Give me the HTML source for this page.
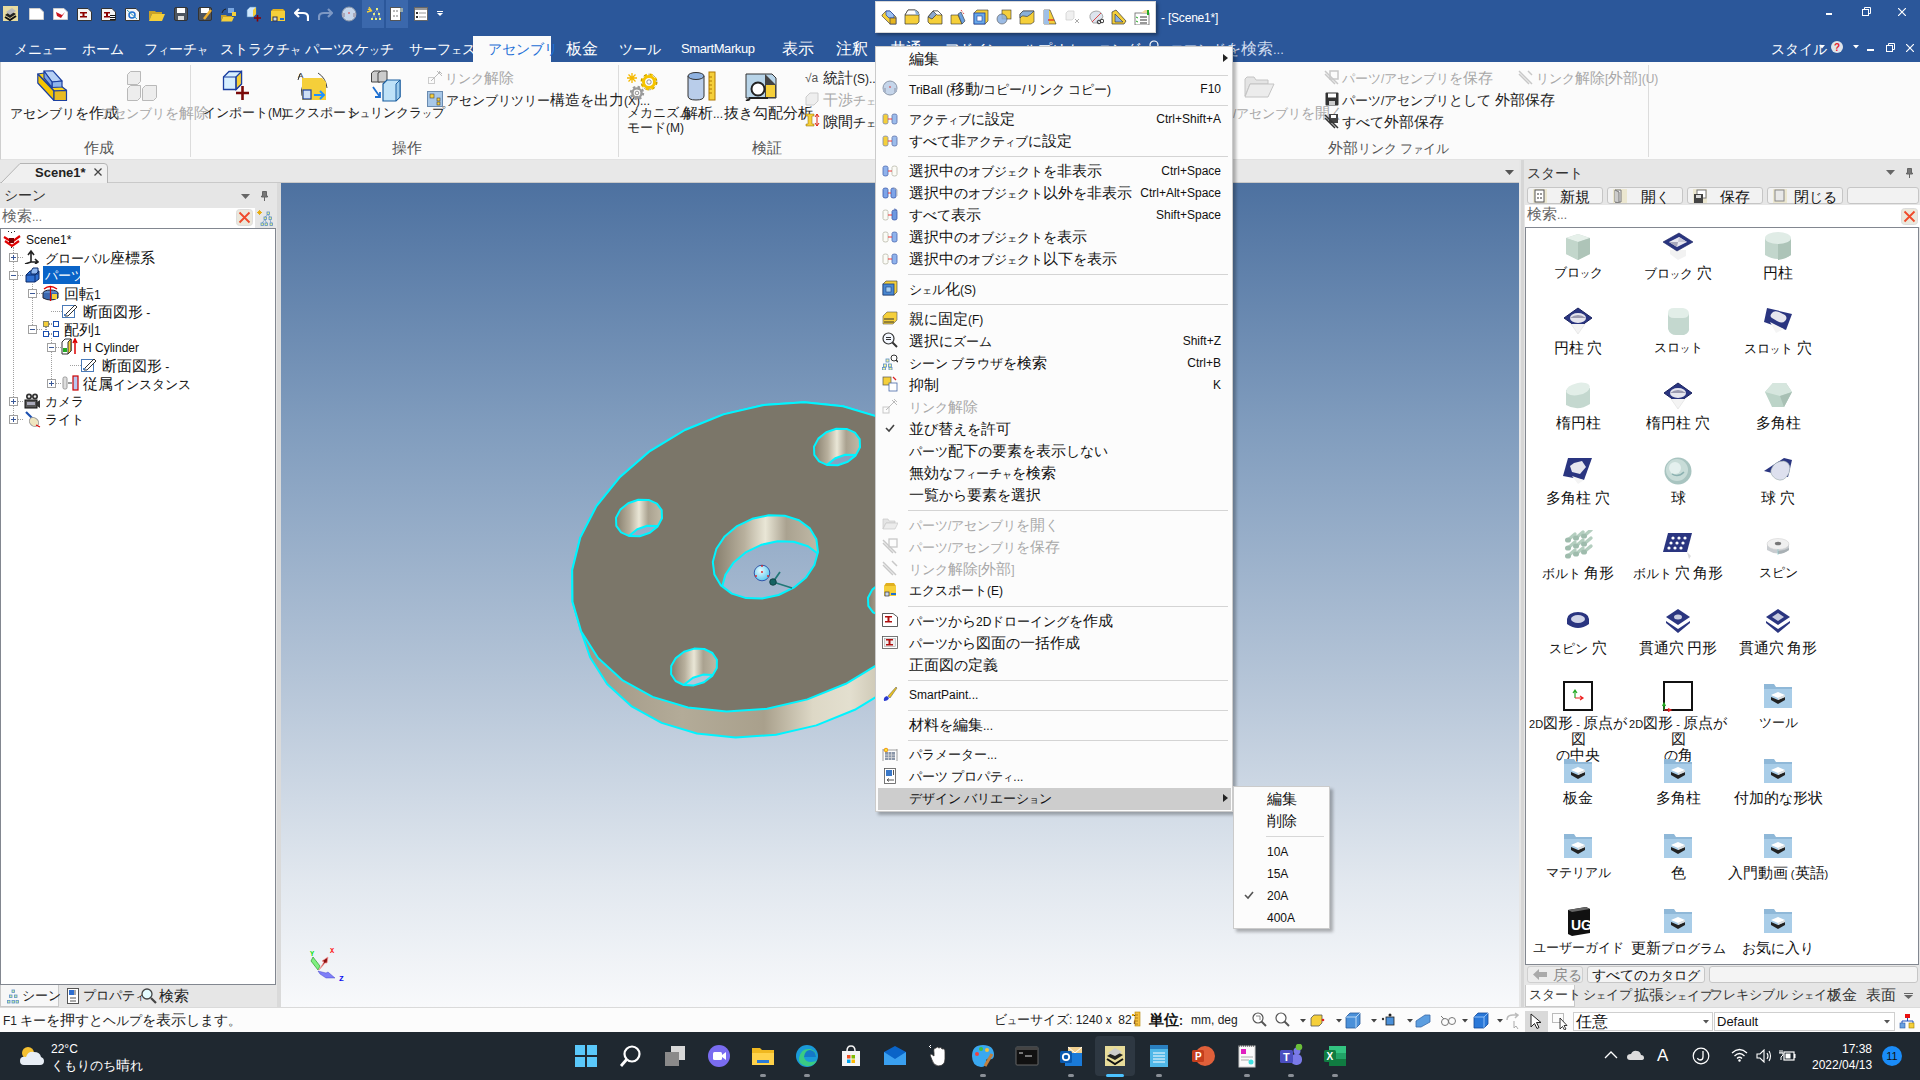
<!DOCTYPE html>
<html><head><meta charset="utf-8"><title>IronCAD</title>
<style>
*{box-sizing:border-box;margin:0;padding:0}
html,body{width:1920px;height:1080px;overflow:hidden;background:#f0f0f0;font-family:"Liberation Sans",sans-serif;font-size:12px;color:#222}
.a{position:absolute;display:block}
.t{position:absolute;white-space:nowrap;line-height:14px}
</style></head><body>
<div class="a" style="left:0px;top:0px;width:1920px;height:62px;background:#2b579a;"></div><div class="a" style="left:362px;top:0px;width:22px;height:28px;background:#3b68ac;"></div><div class="a" style="left:386px;top:0px;width:22px;height:28px;background:#3b68ac;"></div><svg class="a" style="left:3px;top:6px;" width="15" height="15" viewBox="0 0 15 15"><rect x="0" y="0" width="15" height="15" fill="#e8dca0"/><path d="M2 9 L8 5 L13 8 L7 12 Z" fill="#222"/><path d="M3 6 L9 2 L13 5 L7 9Z" fill="#bbb"/><path d="M2 11 L7 14 L13 10" stroke="#111" stroke-width="2" fill="none"/></svg><svg class="a" style="left:29px;top:8px;" width="15" height="12" viewBox="0 0 15 12"><path d="M0.5 0.5 H11 L14.5 4 V11.5 H0.5Z" fill="#fff" stroke="#ccc"/></svg><svg class="a" style="left:53px;top:8px;" width="15" height="12" viewBox="0 0 15 12"><path d="M0.5 0.5 H11 L14.5 4 V11.5 H0.5Z" fill="#fff" stroke="#ccc"/><path d="M3 4 L9 7 L12 4 L8 10 L4 8Z" fill="#c8141e"/></svg><svg class="a" style="left:77px;top:8px;" width="15" height="13" viewBox="0 0 15 13"><path d="M0.5 0.5 H11 L14.5 4 V12.5 H0.5Z" fill="#f4f4f4" stroke="#333"/><path d="M3 4 H10 V5.5 H7.5 V8 H10 V9.5 H3 V8 H5.5 V5.5 H3Z" fill="#8b0000"/></svg><svg class="a" style="left:101px;top:8px;" width="15" height="13" viewBox="0 0 15 13"><path d="M0.5 0.5 H11 L14.5 4 V12.5 H0.5Z" fill="#f4f4f4" stroke="#333"/><path d="M3 4 H9 V5.5 H7 V8 H9 V9.5 H3 V8 H5 V5.5 H3Z" fill="#8b0000"/><path d="M9 7.5H14.5 M9 9.5H14.5 M9 11.5H14.5" stroke="#111" stroke-width="1.1"/></svg><svg class="a" style="left:125px;top:8px;" width="15" height="13" viewBox="0 0 15 13"><path d="M0.5 0.5 H11 L14.5 4 V12.5 H0.5Z" fill="#f4f4f4" stroke="#333"/><circle cx="7" cy="7" r="3" fill="none" stroke="#1e6fd0" stroke-width="1.5"/><path d="M2 2 L12 11" stroke="#39b" /></svg><svg class="a" style="left:149px;top:9px;" width="16" height="12" viewBox="0 0 16 12"><path d="M0 2 H6 L7 3 H13 V5 H3 L0 12Z" fill="#c9a227"/><path d="M3 5 H16 L13 12 H0Z" fill="#f5cf3a"/></svg><svg class="a" style="left:174px;top:7px;" width="14" height="14" viewBox="0 0 14 14"><rect x="0.5" y="0.5" width="13" height="13" rx="1.5" fill="#4d5560" stroke="#333"/><rect x="3" y="1" width="8" height="5" fill="#fff"/><rect x="4" y="9" width="6" height="4" fill="#ddd"/></svg><svg class="a" style="left:198px;top:7px;" width="14" height="14" viewBox="0 0 14 14"><rect x="0.5" y="0.5" width="13" height="13" rx="1.5" fill="#4d5560" stroke="#333"/><rect x="3" y="1" width="8" height="5" fill="#fff"/><path d="M6 12 L13 3" stroke="#f0b030" stroke-width="2.5"/></svg><svg class="a" style="left:221px;top:6px;" width="16" height="16" viewBox="0 0 16 16"><path d="M0 9 H5 L6 10 H11 V11 H2 L0 15Z" fill="#c9a227"/><path d="M2 11 H13 L11 15.5 H0Z" fill="#f5cf3a"/><rect x="7" y="2" width="6" height="5" fill="#7aa7e0"/><rect x="11" y="6" width="4" height="4" fill="#f5cf3a"/><path d="M1 7 Q2 3 5 3" stroke="#222" fill="none"/></svg><svg class="a" style="left:246px;top:6px;" width="16" height="16" viewBox="0 0 16 16"><path d="M1 4 L4 1 H10 V8 L7 11 H1Z" fill="#cfe8ff" stroke="#5588bb" stroke-width="0.6"/><path d="M7 4 L10 1 V8 L7 11Z" fill="#f5cf3a"/><path d="M8 12 H15 M11.5 9 V15.5" stroke="#8b0000" stroke-width="1.6"/></svg><svg class="a" style="left:270px;top:7px;" width="16" height="15" viewBox="0 0 16 15"><path d="M1 4 H15 V14 H1Z" fill="#f5cf3a"/><path d="M1 4 L3 2 H13 L15 4Z" fill="#e0b020"/><rect x="3" y="10" width="4" height="4" fill="#ccd8e8" stroke="#334"/><rect x="10" y="11" width="4" height="2" fill="#1e6fd0"/></svg><svg class="a" style="left:294px;top:8px;" width="15" height="13" viewBox="0 0 15 13"><path d="M5 1 L1 5 L5 9" fill="none" stroke="#fff" stroke-width="2.2"/><path d="M2 5 H9 Q14 5 14 9 V13" fill="none" stroke="#fff" stroke-width="2.2"/></svg><svg class="a" style="left:318px;top:8px;" width="15" height="13" viewBox="0 0 15 13"><path d="M10 1 L14 5 L10 9" fill="none" stroke="#7d98c4" stroke-width="2.2"/><path d="M13 5 H6 Q1 5 1 9 V12" fill="none" stroke="#7d98c4" stroke-width="2.2"/></svg><svg class="a" style="left:341px;top:6px;" width="16" height="16" viewBox="0 0 16 16"><circle cx="8" cy="8" r="7" fill="#c5d5ea" stroke="#8a96a8"/><rect x="1" y="7" width="3" height="4" fill="#aab" /><rect x="12" y="7" width="3" height="4" fill="#aab"/><circle cx="8" cy="7" r="0.8" fill="#d22"/></svg><svg class="a" style="left:366px;top:6px;" width="15" height="15" viewBox="0 0 15 15"><path d="M3 1 L5 4 L2 3 L5 5 L1 6" stroke="#f5cf3a" fill="none" stroke-width="1.3"/><g fill="#e8f080"><rect x="10" y="2" width="2" height="2"/><rect x="7" y="7" width="2" height="2"/><rect x="12" y="7" width="2" height="2"/><rect x="5" y="12" width="2" height="2"/><rect x="9" y="12" width="2" height="2"/><rect x="13" y="12" width="2" height="2"/></g><path d="M11 4 L8 7 M11 4 L13 7 M8 9 L6 12 M8 9 L10 12 M13 9 L14 12" stroke="#aac" stroke-width="0.6"/></svg><svg class="a" style="left:390px;top:7px;" width="14" height="14" viewBox="0 0 14 14"><rect x="0.5" y="0.5" width="10" height="13" fill="#fff" stroke="#555"/><rect x="10" y="1" width="3" height="4" fill="#9aa"/><g fill="#bbb"><rect x="3" y="3" width="2" height="2"/><rect x="6" y="3" width="2" height="2"/><rect x="3" y="8" width="2" height="2"/><rect x="6" y="8" width="2" height="2"/></g></svg><svg class="a" style="left:414px;top:7px;" width="14" height="14" viewBox="0 0 14 14"><rect x="0.5" y="0.5" width="13" height="13" fill="#fff" stroke="#666"/><rect x="1" y="1" width="12" height="2" fill="#999"/><rect x="2" y="5" width="2" height="2" fill="#333"/><rect x="2" y="9" width="2" height="2" fill="#333"/><path d="M5 6H12 M5 10H12" stroke="#999"/></svg><svg class="a" style="left:437px;top:11px;" width="6" height="6" viewBox="0 0 6 6"><path d="M0 0.5H6" stroke="#fff"/><path d="M0 2 H6 L3 5Z" fill="#fff"/></svg><div class="t" style="left:1161px;top:11px;font-size:12px;color:#fff;letter-spacing:-0.2px;">- [Scene1*]</div><div class="a" style="left:1826px;top:13px;width:6px;height:1.5px;background:#fff;"></div><svg class="a" style="left:1862px;top:7px;" width="9" height="9" viewBox="0 0 9 9"><rect x="0.5" y="2.5" width="6" height="6" fill="none" stroke="#fff"/><path d="M2.5 2.5 V0.5 H8.5 V6.5 H6.5" fill="none" stroke="#fff"/></svg><svg class="a" style="left:1898px;top:8px;" width="8" height="8" viewBox="0 0 8 8"><path d="M0 0 L8 8 M8 0 L0 8" stroke="#fff" stroke-width="1.2"/></svg><div class="t" style="left:1771px;top:42px;font-size:13px;color:#fff;"><span style="font-size:14.0px;letter-spacing:0">スタイル</span></div><svg class="a" style="left:1819px;top:45px;" width="6" height="4" viewBox="0 0 6 4"><path d="M0 0H6L3 3.5Z" fill="#fff"/></svg><svg class="a" style="left:1831px;top:41px;" width="12" height="12" viewBox="0 0 12 12"><circle cx="6" cy="6" r="6" fill="#dfe4ea"/><text x="6" y="10" font-size="10" font-weight="bold" text-anchor="middle" fill="#e8202a" font-family="Liberation Sans">?</text></svg><svg class="a" style="left:1853px;top:45px;" width="6" height="4" viewBox="0 0 6 4"><path d="M0 0H6L3 3.5Z" fill="#fff"/></svg><div class="a" style="left:1867px;top:49px;width:7px;height:1.5px;background:#fff;"></div><svg class="a" style="left:1886px;top:43px;" width="9" height="9" viewBox="0 0 9 9"><rect x="0.5" y="2.5" width="6" height="6" fill="none" stroke="#fff"/><path d="M2.5 2.5 V0.5 H8.5 V6.5 H6.5" fill="none" stroke="#fff"/></svg><svg class="a" style="left:1906px;top:44px;" width="8" height="8" viewBox="0 0 8 8"><path d="M0 0 L8 8 M8 0 L0 8" stroke="#fff" stroke-width="1.2"/></svg><div class="a" style="left:473px;top:36px;width:78px;height:26px;background:#fbfbfb;"></div><div class="t" style="left:14px;top:42px;font-size:13px;color:#fff;"><span style="font-size:14.0px;letter-spacing:0">メニ</span><span style="font-size:11.0px;letter-spacing:0">ュ</span><span style="font-size:14.0px;letter-spacing:0">ー</span></div><div class="t" style="left:82px;top:42px;font-size:13px;color:#fff;"><span style="font-size:14.0px;letter-spacing:0">ホーム</span></div><div class="t" style="left:144px;top:42px;font-size:13px;color:#fff;"><span style="font-size:14.0px;letter-spacing:0">フ</span><span style="font-size:11.0px;letter-spacing:0">ィ</span><span style="font-size:14.0px;letter-spacing:0">ーチ</span><span style="font-size:11.0px;letter-spacing:0">ャ</span></div><div class="t" style="left:220px;top:42px;font-size:13px;color:#fff;"><span style="font-size:14.0px;letter-spacing:0">ストラクチ</span><span style="font-size:11.0px;letter-spacing:0">ャ</span> <span style="font-size:14.0px;letter-spacing:0">パーツ</span></div><div class="t" style="left:341px;top:42px;font-size:13px;color:#fff;"><span style="font-size:14.0px;letter-spacing:0">スケ</span><span style="font-size:11.0px;letter-spacing:0">ッ</span><span style="font-size:14.0px;letter-spacing:0">チ</span></div><div class="t" style="left:409px;top:42px;font-size:13px;color:#fff;"><span style="font-size:14.0px;letter-spacing:0">サーフ</span><span style="font-size:11.0px;letter-spacing:0">ェ</span><span style="font-size:14.0px;letter-spacing:0">ス</span></div><div class="t" style="left:566px;top:42px;font-size:13px;color:#fff;"><span style="font-size:16.0px;letter-spacing:0">板金</span></div><div class="t" style="left:619px;top:42px;font-size:13px;color:#fff;"><span style="font-size:14.0px;letter-spacing:0">ツール</span></div><div class="t" style="left:681px;top:42px;font-size:13px;color:#fff;letter-spacing:-0.4px;">SmartMarkup</div><div class="t" style="left:782px;top:42px;font-size:13px;color:#fff;"><span style="font-size:16.0px;letter-spacing:0">表示</span></div><div class="t" style="left:836px;top:42px;font-size:13px;color:#fff;"><span style="font-size:16.0px;letter-spacing:0">注釈</span></div><div class="t" style="left:890px;top:42px;font-size:13px;color:#fff;"><span style="font-size:16.0px;letter-spacing:0">共通</span></div><div class="t" style="left:945px;top:42px;font-size:13px;color:#fff;"><span style="font-size:14.0px;letter-spacing:0">アドイン</span></div><div class="t" style="left:1010px;top:42px;font-size:13px;color:#fff;"><span style="font-size:14.0px;letter-spacing:0">ヘルプ</span>/<span style="font-size:14.0px;letter-spacing:0">トレーニング</span></div><div class="t" style="left:488px;top:42px;font-size:13px;color:#1d6fd6;"><span style="font-size:14.0px;letter-spacing:0">アセンブリ</span></div><svg class="a" style="left:1149px;top:40px;" width="12" height="12" viewBox="0 0 12 12"><circle cx="5" cy="5" r="4" fill="none" stroke="#fff" stroke-width="1.2"/><path d="M8 8 L11 11" stroke="#fff" stroke-width="1.3"/></svg><div class="t" style="left:1170px;top:42px;font-size:13px;color:#d0dcee;"><span style="font-size:14.0px;letter-spacing:0">コマンド</span><span style="font-size:15.0px;letter-spacing:0">を</span><span style="font-size:16.0px;letter-spacing:0">検索</span>...</div><div class="a" style="left:0px;top:62px;width:1920px;height:98px;background:#fbfbfb;border-left:1px solid #cfcfcf;border-bottom:1px solid #e2e2e2;"></div><div class="a" style="left:190px;top:65px;width:1px;height:92px;background:#dcdcdc;"></div><div class="a" style="left:618px;top:65px;width:1px;height:92px;background:#dcdcdc;"></div><div class="a" style="left:1648px;top:65px;width:1px;height:92px;background:#dcdcdc;"></div><svg class="a" style="left:37px;top:70px;" width="32" height="32" viewBox="0 0 32 32"><g stroke="#1b3fa0" stroke-width="1.2" stroke-linejoin="round"><path d="M0.8 4 L7 3 L29.5 20.3 L17 21Z" fill="#f7d21e"/><path d="M0.8 4 L17 21 V30.5 L0.8 13Z" fill="#f5c400"/><path d="M17 21 L29.5 20.3 V30.5 H17Z" fill="#e8bb22"/><path d="M7 1 L16 0.8 L25 11 L15 12Z" fill="#b6d0f5"/><path d="M15 12 L25 11 V17 L15 17.5Z" fill="#8fb4ea"/><path d="M7 1 L15 12 V17.5 L7 8Z" fill="#7ea4e0"/></g></svg><div class="t" style="left:10px;top:106px;font-size:12px;color:#222;"><span style="font-size:13.0px;letter-spacing:0">アセンブリ</span><span style="font-size:14.0px;letter-spacing:0">を</span><span style="font-size:15.0px;letter-spacing:0">作成</span></div><svg class="a" style="left:126px;top:70px;" width="32" height="32" viewBox="0 0 32 32"><g fill="#ededed" stroke="#b9b9b9"><path d="M1.5 4.5 L4.5 1.5 H14.5 V11.5 L11.5 14.5 H1.5Z"/><path d="M1.5 18.5 L4.5 15.5 H14.5 V27.5 L11.5 30.5 H1.5Z"/><path d="M16.5 18.5 L19.5 15.5 H30.5 V27.5 L27.5 30.5 H16.5Z"/></g></svg><div class="t" style="left:100px;top:106px;font-size:12px;color:#a8a8a8;"><span style="font-size:13.0px;letter-spacing:0">アセンブリ</span><span style="font-size:14.0px;letter-spacing:0">を</span><span style="font-size:15.0px;letter-spacing:0">解除</span></div><div class="t" style="left:84px;top:141px;font-size:12px;color:#555;"><span style="font-size:15.0px;letter-spacing:0">作成</span></div><svg class="a" style="left:222px;top:70px;" width="32" height="32" viewBox="0 0 32 32"><path d="M1.5 7 L7 1.5 H19.5 V14 L14 19.5 H1.5Z" fill="#d6efff" stroke="#1b3fa0" stroke-width="1.3"/><path d="M14 7 L19.5 1.5 V14 L14 19.5Z" fill="#f5cf3a" stroke="#1b3fa0" stroke-width="1.2"/><path d="M1.5 7 H14 V19.5" fill="none" stroke="#1b3fa0" stroke-width="1.2"/><path d="M14 23 H27 M20.5 16 V30" stroke="#7a0a0a" stroke-width="2.6"/></svg><div class="t" style="left:203px;top:106px;font-size:12px;color:#222;"><span style="font-size:13.0px;letter-spacing:0">インポート</span>(M)</div><svg class="a" style="left:296px;top:70px;" width="32" height="32" viewBox="0 0 32 32"><path d="M4 4 L2 10" stroke="#333"/><text x="2" y="8" font-size="8" fill="#333" font-family="Liberation Sans">A</text><path d="M8 30 Q2 20 10 10" stroke="#444" fill="none"/><path d="M22 3 Q30 8 31 18" stroke="#444" fill="none"/><path d="M6 8 H26 L30 12 V30 H6Z" fill="#f5cf3a"/><rect x="7" y="20" width="8" height="9" fill="#cfe0f5" stroke="#1b3fa0" stroke-width="1.2"/><path d="M18 25 H27 M24 21 L28 25 L24 29" stroke="#1e90ff" stroke-width="2" fill="none"/></svg><div class="t" style="left:281px;top:106px;font-size:12px;color:#222;"><span style="font-size:13.0px;letter-spacing:0">エクスポート</span></div><svg class="a" style="left:370px;top:70px;" width="32" height="32" viewBox="0 0 32 32"><path d="M1.5 3 L4 1 H10 V12 H1.5Z" fill="#ccc" stroke="#444"/><path d="M8 3 L11 1 H17 V12 H8Z" fill="#ccc" stroke="#444"/><path d="M13 14 L17 10 H30 V27 L26 31 H13Z" fill="#bfe2f8" stroke="#1b5fa0" stroke-width="1.2"/><path d="M26 14 L30 10 V27 L26 31Z" fill="#9ccbec" stroke="#1b5fa0"/><path d="M3 17 L10 27 M10 22 V27 H5" stroke="#1e6fd0" stroke-width="1.8" fill="none"/></svg><div class="t" style="left:347px;top:106px;font-size:12px;color:#222;"><span style="font-size:13.0px;letter-spacing:0">シ</span><span style="font-size:10.0px;letter-spacing:0">ュ</span><span style="font-size:13.0px;letter-spacing:0">リンクラ</span><span style="font-size:10.0px;letter-spacing:0">ッ</span><span style="font-size:13.0px;letter-spacing:0">プ</span></div><svg class="a" style="left:428px;top:70px;" width="15" height="14" viewBox="0 0 15 14"><rect x="0.5" y="7.5" width="6" height="6" fill="none" stroke="#ccc"/><path d="M3 11 L12 2 M9 1 L14 6 M11 1 L14 4" stroke="#bbb" fill="none"/></svg><div class="t" style="left:445px;top:71px;font-size:12px;color:#a8a8a8;"><span style="font-size:13.0px;letter-spacing:0">リンク</span><span style="font-size:15.0px;letter-spacing:0">解除</span></div><svg class="a" style="left:427px;top:91px;" width="16" height="16" viewBox="0 0 16 16"><rect x="0.5" y="0.5" width="15" height="15" fill="#a8c8e8" stroke="#6a8bb0"/><rect x="3" y="3" width="4" height="4" fill="#f5cf3a" stroke="#444" stroke-width="0.6"/><rect x="10" y="7" width="3" height="3" fill="#f5cf3a" stroke="#444" stroke-width="0.6"/><rect x="10" y="11" width="3" height="3" fill="#f5cf3a" stroke="#444" stroke-width="0.6"/></svg><div class="t" style="left:446px;top:93px;font-size:12px;color:#222;"><span style="font-size:13.0px;letter-spacing:0">アセンブリツリー</span><span style="font-size:15.0px;letter-spacing:0">構造</span><span style="font-size:14.0px;letter-spacing:0">を</span><span style="font-size:15.0px;letter-spacing:0">出力</span>(X)...</div><div class="t" style="left:392px;top:141px;font-size:12px;color:#555;"><span style="font-size:15.0px;letter-spacing:0">操作</span></div><svg class="a" style="left:627px;top:72px;" width="40" height="30" viewBox="0 0 40 30"><circle cx="22" cy="10" r="6.5" fill="none" stroke="#f5c400" stroke-width="4" stroke-dasharray="2.6 2.5"/><circle cx="22" cy="10" r="5.5" fill="none" stroke="#f5c400" stroke-width="3"/><circle cx="22" cy="10" r="7.8" fill="none" stroke="#6a5a10" stroke-width="0.5" stroke-dasharray="2.6 2.5"/><circle cx="22" cy="10" r="2.2" fill="#fbfbfb" stroke="#555" stroke-width="0.6"/><circle cx="10" cy="21" r="5.5" fill="none" stroke="#9a9a9a" stroke-width="3.4" stroke-dasharray="2.2 2.1"/><circle cx="10" cy="21" r="4.6" fill="none" stroke="#9a9a9a" stroke-width="2.4"/><circle cx="10" cy="21" r="1.8" fill="#fbfbfb" stroke="#555" stroke-width="0.6"/><path d="M5 1 V11 M0 6 H10 M1.5 2.5 L8.5 9.5 M8.5 2.5 L1.5 9.5" stroke="#f5b800" stroke-width="1.3"/></svg><div class="t" style="left:627px;top:106px;font-size:12px;color:#222;"><span style="font-size:13.0px;letter-spacing:0">メカニズム</span></div><div class="t" style="left:627px;top:121px;font-size:12px;color:#222;"><span style="font-size:13.0px;letter-spacing:0">モード</span>(M)</div><svg class="a" style="left:686px;top:71px;" width="32" height="30" viewBox="0 0 32 30"><path d="M2 5 V25 Q2 29 10 29 Q18 29 18 25 V5" fill="#b9cdea" stroke="#333"/><ellipse cx="10" cy="5" rx="8" ry="3.5" fill="#8fb2e0" stroke="#333"/><rect x="23" y="1" width="6" height="28" fill="#f5cf3a" stroke="#b07800"/><path d="M23 6H26 M23 10H26 M23 14H26 M23 18H26 M23 22H26" stroke="#b07800"/></svg><div class="t" style="left:683px;top:106px;font-size:12px;color:#222;"><span style="font-size:15.0px;letter-spacing:0">解析</span>...</div><svg class="a" style="left:745px;top:73px;" width="32" height="28" viewBox="0 0 32 28"><path d="M1 1 H27 L31 5 V25 H1Z" fill="#b8d4e8" stroke="#333"/><path d="M20 1 L31 12 V25 H20Z" fill="#444"/><rect x="21" y="12" width="9" height="12" fill="#f5cf3a"/><circle cx="13" cy="16" r="6.5" fill="#fff" stroke="#222" stroke-width="2"/><path d="M5 26 L1 28" stroke="#222" stroke-width="2"/><path d="M4 25 H23" stroke="#222" stroke-width="2"/></svg><div class="t" style="left:724px;top:106px;font-size:12px;color:#222;"><span style="font-size:15.0px;letter-spacing:0">抜</span><span style="font-size:14.0px;letter-spacing:0">き</span><span style="font-size:15.0px;letter-spacing:0">勾配分析</span></div><svg class="a" style="left:805px;top:70px;" width="14" height="14" viewBox="0 0 14 14"><text x="0" y="12" font-size="12" fill="#555" font-family="Liberation Sans">√a</text></svg><div class="t" style="left:823px;top:71px;font-size:12px;color:#222;"><span style="font-size:15.0px;letter-spacing:0">統計</span>(S)...</div><svg class="a" style="left:805px;top:92px;" width="14" height="14" viewBox="0 0 14 14"><path d="M1 5 L5 1 H13 V9 L9 13 H1Z" fill="#eee" stroke="#ccc"/></svg><div class="t" style="left:823px;top:93px;font-size:12px;color:#a8a8a8;"><span style="font-size:15.0px;letter-spacing:0">干渉</span><span style="font-size:13.0px;letter-spacing:0">チ</span><span style="font-size:10.0px;letter-spacing:0">ェッ</span><span style="font-size:13.0px;letter-spacing:0">ク</span></div><svg class="a" style="left:805px;top:113px;" width="16" height="15" viewBox="0 0 16 15"><path d="M1 1 H9 V3 H7 V11 H9 V13 H1 V11 H3 V3 H1Z" fill="#f5cf3a" stroke="#886600" stroke-width="0.5"/><path d="M12 1 V13 M10 4 L12 1 L14 4 M10 10 L12 13 L14 10" stroke="#d21" fill="none"/></svg><div class="t" style="left:823px;top:115px;font-size:12px;color:#222;"><span style="font-size:15.0px;letter-spacing:0">隙間</span><span style="font-size:13.0px;letter-spacing:0">チ</span><span style="font-size:10.0px;letter-spacing:0">ェッ</span><span style="font-size:13.0px;letter-spacing:0">ク</span></div><div class="t" style="left:752px;top:141px;font-size:12px;color:#555;"><span style="font-size:15.0px;letter-spacing:0">検証</span></div><svg class="a" style="left:1244px;top:76px;" width="31" height="22" viewBox="0 0 31 22"><path d="M1 3 L3 1 H10 L12 4 H24 V8 H6 L1 20Z" fill="#e4e4e4" stroke="#c4c4c4"/><path d="M6 8 H30 L24 21 H1Z" fill="#ececec" stroke="#c4c4c4"/></svg><div class="t" style="left:1233px;top:106px;font-size:12px;color:#a8a8a8;">/<span style="font-size:13.0px;letter-spacing:0">アセンブリ</span><span style="font-size:14.0px;letter-spacing:0">を</span><span style="font-size:15.0px;letter-spacing:0">開</span><span style="font-size:14.0px;letter-spacing:0">く</span></div><svg class="a" style="left:1324px;top:70px;" width="15" height="15" viewBox="0 0 15 15"><path d="M1 1 L14 14 M1 4 L11 14" stroke="#c8c8c8" stroke-width="1.5"/><rect x="6" y="1" width="8" height="8" fill="none" stroke="#c8c8c8" stroke-width="1.5"/></svg><div class="t" style="left:1342px;top:71px;font-size:12px;color:#a8a8a8;"><span style="font-size:13.0px;letter-spacing:0">パーツ</span>/<span style="font-size:13.0px;letter-spacing:0">アセンブリ</span><span style="font-size:14.0px;letter-spacing:0">を</span><span style="font-size:15.0px;letter-spacing:0">保存</span></div><svg class="a" style="left:1325px;top:92px;" width="14" height="14" viewBox="0 0 14 14"><rect x="0.5" y="0.5" width="13" height="13" rx="1" fill="#333"/><rect x="3" y="1.5" width="8" height="4" fill="#fff"/><rect x="4" y="9" width="6" height="4" fill="#ccc"/></svg><div class="t" style="left:1342px;top:93px;font-size:12px;color:#222;"><span style="font-size:13.0px;letter-spacing:0">パーツ</span>/<span style="font-size:13.0px;letter-spacing:0">アセンブリ</span><span style="font-size:14.0px;letter-spacing:0">として</span> <span style="font-size:15.0px;letter-spacing:0">外部保存</span></div><svg class="a" style="left:1324px;top:113px;" width="15" height="16" viewBox="0 0 15 16"><rect x="5" y="1" width="9" height="9" fill="#444"/><rect x="7" y="2" width="5" height="3" fill="#fff"/><path d="M1 2 L14 15 M1 5 L11 15" stroke="#333" stroke-width="1.5"/></svg><div class="t" style="left:1342px;top:115px;font-size:12px;color:#222;"><span style="font-size:14.0px;letter-spacing:0">すべて</span><span style="font-size:15.0px;letter-spacing:0">外部保存</span></div><svg class="a" style="left:1518px;top:70px;" width="15" height="15" viewBox="0 0 15 15"><path d="M1 1 L14 14 M1 4 L11 14 M10 1 L14 5" stroke="#c8c8c8" stroke-width="1.5"/></svg><div class="t" style="left:1536px;top:71px;font-size:12px;color:#a8a8a8;"><span style="font-size:13.0px;letter-spacing:0">リンク</span><span style="font-size:15.0px;letter-spacing:0">解除</span>[<span style="font-size:15.0px;letter-spacing:0">外部</span>](U)</div><div class="t" style="left:1328px;top:141px;font-size:12px;color:#555;"><span style="font-size:15.0px;letter-spacing:0">外部</span><span style="font-size:13.0px;letter-spacing:0">リンク</span> <span style="font-size:13.0px;letter-spacing:0">フ</span><span style="font-size:10.0px;letter-spacing:0">ァ</span><span style="font-size:13.0px;letter-spacing:0">イル</span></div><div class="a" style="left:0px;top:160px;width:1920px;height:23px;background:#e8e8e8;border-bottom:1px solid #c9c9c9;"></div><svg class="a" style="left:0px;top:162px;" width="112" height="21" viewBox="0 0 112 21"><path d="M1 21 L20 1.5 H104 Q107.5 1.5 107.5 5 V21" fill="#f0f0f0" stroke="#b4b4b4"/></svg><div class="t" style="left:35px;top:166px;font-size:13px;color:#222;font-weight:bold;">Scene1*</div><svg class="a" style="left:94px;top:168px;" width="8" height="8" viewBox="0 0 8 8"><path d="M0.5 0.5 L7.5 7.5 M7.5 0.5 L0.5 7.5" stroke="#444" stroke-width="1.3"/></svg><svg class="a" style="left:1505px;top:170px;" width="9" height="5" viewBox="0 0 9 5"><path d="M0 0H9L4.5 5Z" fill="#555"/></svg><div class="a" style="left:0px;top:183px;width:281px;height:824px;background:#e6e6e6;"></div><div class="a" style="left:277px;top:183px;width:4px;height:824px;background:#dadada;"></div><div class="t" style="left:4px;top:188px;font-size:13px;color:#333;"><span style="font-size:14.0px;letter-spacing:0">シーン</span></div><svg class="a" style="left:241px;top:194px;" width="9" height="5" viewBox="0 0 9 5"><path d="M0 0H9L4.5 5Z" fill="#666"/></svg><svg class="a" style="left:261px;top:191px;" width="7" height="10" viewBox="0 0 7 10"><path d="M1.5 0.5 H5.5 V5 H6.5 V6 H0.5 V5 H1.5Z M3.5 6 V10" fill="#777" stroke="#666"/></svg><div class="a" style="left:0px;top:208px;width:255px;height:20px;background:#ffffff;"></div><div class="t" style="left:2px;top:209px;font-size:12px;color:#666;"><span style="font-size:15.0px;letter-spacing:0">検索</span>...</div><svg class="a" style="left:236px;top:209px;" width="17" height="17" viewBox="0 0 17 17"><rect x="0.5" y="0.5" width="16" height="16" rx="3" fill="#ebe8dc" stroke="#ddd"/><path d="M3.5 3.5 L13.5 13.5 M13.5 3.5 L3.5 13.5" stroke="#f04a2a" stroke-width="1.8"/></svg><svg class="a" style="left:257px;top:210px;" width="16" height="16" viewBox="0 0 16 16"><path d="M1 1 L4 4 M4 1 L1 4 M2.5 0 V5 M0 2.5 H5" stroke="#e8a800" stroke-width="0.9"/><g fill="#e6f08a" stroke="#5a8fc8" stroke-width="0.8"><rect x="10" y="2" width="2.5" height="2.5"/><rect x="7" y="7" width="2.5" height="2.5"/><rect x="12" y="7" width="2.5" height="2.5"/><rect x="4" y="13" width="2.5" height="2.5"/><rect x="8" y="13" width="2.5" height="2.5"/><rect x="13" y="13" width="2.5" height="2.5"/></g><path d="M11 4.5 L8 7 M11 4.5 L13 7 M8 9.5 L5 13 M8 9.5 L9.5 13 M13 9.5 L14 13" stroke="#5a8fc8" stroke-width="0.7" fill="none"/></svg><div class="a" style="left:0px;top:228px;width:276px;height:757px;background:#ffffff;border:1px solid #828790;"></div><div class="a" style="left:0;top:1px;width:0;height:0"><div class="a" style="left:13px;top:246px;width:1px;height:172px;background:transparent;border-left:1px dotted #a0a0a0;"></div><div class="a" style="left:32px;top:283px;width:1px;height:45px;background:transparent;border-left:1px dotted #a0a0a0;"></div><div class="a" style="left:51px;top:337px;width:1px;height:45px;background:transparent;border-left:1px dotted #a0a0a0;"></div><div class="a" style="left:18px;top:256px;width:5px;height:1px;background:transparent;border-top:1px dotted #a0a0a0;"></div><svg class="a" style="left:9px;top:252px;" width="9" height="9" viewBox="0 0 9 9"><rect x="0.5" y="0.5" width="8" height="8" fill="#fff" stroke="#a0a0a0"/><path d="M2 4.5 H7" stroke="#3b5998"/><path d="M4.5 2 V7" stroke="#3b5998"/></svg><div class="a" style="left:18px;top:274px;width:5px;height:1px;background:transparent;border-top:1px dotted #a0a0a0;"></div><svg class="a" style="left:9px;top:270px;" width="9" height="9" viewBox="0 0 9 9"><rect x="0.5" y="0.5" width="8" height="8" fill="#fff" stroke="#a0a0a0"/><path d="M2 4.5 H7" stroke="#3b5998"/></svg><div class="a" style="left:37px;top:292px;width:5px;height:1px;background:transparent;border-top:1px dotted #a0a0a0;"></div><svg class="a" style="left:28px;top:288px;" width="9" height="9" viewBox="0 0 9 9"><rect x="0.5" y="0.5" width="8" height="8" fill="#fff" stroke="#a0a0a0"/><path d="M2 4.5 H7" stroke="#3b5998"/></svg><div class="a" style="left:37px;top:328px;width:5px;height:1px;background:transparent;border-top:1px dotted #a0a0a0;"></div><svg class="a" style="left:28px;top:324px;" width="9" height="9" viewBox="0 0 9 9"><rect x="0.5" y="0.5" width="8" height="8" fill="#fff" stroke="#a0a0a0"/><path d="M2 4.5 H7" stroke="#3b5998"/></svg><div class="a" style="left:56px;top:346px;width:5px;height:1px;background:transparent;border-top:1px dotted #a0a0a0;"></div><svg class="a" style="left:47px;top:342px;" width="9" height="9" viewBox="0 0 9 9"><rect x="0.5" y="0.5" width="8" height="8" fill="#fff" stroke="#a0a0a0"/><path d="M2 4.5 H7" stroke="#3b5998"/></svg><div class="a" style="left:56px;top:382px;width:5px;height:1px;background:transparent;border-top:1px dotted #a0a0a0;"></div><svg class="a" style="left:47px;top:378px;" width="9" height="9" viewBox="0 0 9 9"><rect x="0.5" y="0.5" width="8" height="8" fill="#fff" stroke="#a0a0a0"/><path d="M2 4.5 H7" stroke="#3b5998"/><path d="M4.5 2 V7" stroke="#3b5998"/></svg><div class="a" style="left:18px;top:400px;width:5px;height:1px;background:transparent;border-top:1px dotted #a0a0a0;"></div><svg class="a" style="left:9px;top:396px;" width="9" height="9" viewBox="0 0 9 9"><rect x="0.5" y="0.5" width="8" height="8" fill="#fff" stroke="#a0a0a0"/><path d="M2 4.5 H7" stroke="#3b5998"/><path d="M4.5 2 V7" stroke="#3b5998"/></svg><div class="a" style="left:18px;top:418px;width:5px;height:1px;background:transparent;border-top:1px dotted #a0a0a0;"></div><svg class="a" style="left:9px;top:414px;" width="9" height="9" viewBox="0 0 9 9"><rect x="0.5" y="0.5" width="8" height="8" fill="#fff" stroke="#a0a0a0"/><path d="M2 4.5 H7" stroke="#3b5998"/><path d="M4.5 2 V7" stroke="#3b5998"/></svg><div class="a" style="left:51px;top:310px;width:11px;height:1px;background:transparent;border-top:1px dotted #a0a0a0;"></div><div class="a" style="left:70px;top:364px;width:11px;height:1px;background:transparent;border-top:1px dotted #a0a0a0;"></div><svg class="a" style="left:3px;top:230px;" width="18" height="17" viewBox="0 0 18 17"><path d="M1 6 L9 11 L17 5 M2 10 L9 15 L16 10" stroke="#e00000" stroke-width="2.2" fill="none"/><rect x="6" y="7" width="5" height="5" fill="#7a0000"/><g fill="#222"><rect x="5" y="0" width="1" height="1"/><rect x="8" y="1" width="1" height="1"/><rect x="11" y="0" width="1" height="1"/><rect x="8" y="16" width="1" height="1"/></g></svg><div class="t" style="left:26px;top:232px;font-size:12px;color:#111;">Scene1*</div><svg class="a" style="left:24px;top:248px;" width="15" height="15" viewBox="0 0 15 15"><path d="M7 13 V3 M4 6 L7 2 L10 6" stroke="#222" stroke-width="1.6" fill="none"/><path d="M7 13 L1 15 M7 13 L14 13 M11 10 L14 13 L11 15" stroke="#222" stroke-width="1.6" fill="none"/></svg><div class="t" style="left:45px;top:250px;font-size:12px;color:#111;"><span style="font-size:13.0px;letter-spacing:0">グローバル</span><span style="font-size:15.0px;letter-spacing:0">座標系</span></div><svg class="a" style="left:25px;top:266px;" width="15" height="16" viewBox="0 0 15 16"><path d="M1 8 L5 4 H14 V12 L10 15 H1Z" fill="#2f6fd0" stroke="#0a2a6a"/><path d="M6 4 L8 1 H13 V7 H6Z" fill="#8fb6ee" stroke="#0a2a6a"/><path d="M1 8 H10 V15 M10 8 L14 4" stroke="#0a2a6a" fill="none"/></svg><div class="a" style="left:43px;top:265px;width:37px;height:18px;background:#0a64c8;"></div><div class="t" style="left:45px;top:268px;font-size:12px;color:#fff;"><span style="font-size:13.0px;letter-spacing:0">パーツ</span>2</div><svg class="a" style="left:42px;top:284px;" width="17" height="16" viewBox="0 0 17 16"><path d="M2 4 Q8 -1 15 4" stroke="#d00" fill="none" stroke-width="1.4"/><ellipse cx="8.5" cy="8" rx="7.5" ry="3" fill="#5a88c8" stroke="#223"/><path d="M1 8 V13 Q8.5 17 16 13 V8" fill="#3a68b0" stroke="#223"/><rect x="10" y="9" width="5" height="5" fill="#f5cf3a"/><path d="M8.5 2 V16" stroke="#d00" stroke-width="1.2"/></svg><div class="t" style="left:64px;top:286px;font-size:12px;color:#111;"><span style="font-size:15.0px;letter-spacing:0">回転</span>1</div><svg class="a" style="left:62px;top:302px;" width="15" height="15" viewBox="0 0 15 15"><rect x="0.5" y="2.5" width="12" height="12" fill="#fff" stroke="#4a7ab8"/><path d="M4 11 L13 2 L15 4 L6 13 L3 13Z" fill="#fff" stroke="#333"/><rect x="2" y="11" width="2" height="2" fill="#4a7ab8"/></svg><div class="t" style="left:83px;top:304px;font-size:12px;color:#111;"><span style="font-size:15.0px;letter-spacing:0">断面図形</span> -</div><svg class="a" style="left:43px;top:320px;" width="16" height="16" viewBox="0 0 16 16"><rect x="0.5" y="0.5" width="5" height="5" fill="#f5cf3a" stroke="#886"/><rect x="10.5" y="0.5" width="5" height="5" fill="#fff" stroke="#1b4fb0"/><rect x="0.5" y="10.5" width="5" height="5" fill="#fff" stroke="#1b4fb0"/><rect x="10.5" y="10.5" width="5" height="5" fill="#fff" stroke="#1b4fb0"/><path d="M6 3H10 M3 6V10 M6 13H10" stroke="#333" stroke-dasharray="1 1"/></svg><div class="t" style="left:64px;top:322px;font-size:12px;color:#111;"><span style="font-size:15.0px;letter-spacing:0">配列</span>1</div><svg class="a" style="left:61px;top:337px;" width="18" height="17" viewBox="0 0 18 17"><path d="M1 4 L4 1 H10 V13 L7 16 H1Z" fill="#fff" stroke="#333"/><path d="M7 4 L10 1 V13 L7 16Z" fill="#f5cf3a" stroke="#333"/><rect x="2" y="10" width="4" height="4" fill="#2a2"/><path d="M14 16 V2 M12 5 L14 1 L16 5" stroke="#d00" stroke-width="1.5" fill="none"/></svg><div class="t" style="left:83px;top:340px;font-size:12px;color:#111;">H Cylinder</div><svg class="a" style="left:81px;top:356px;" width="15" height="15" viewBox="0 0 15 15"><rect x="0.5" y="2.5" width="12" height="12" fill="#fff" stroke="#4a7ab8"/><path d="M4 11 L13 2 L15 4 L6 13 L3 13Z" fill="#fff" stroke="#333"/><rect x="2" y="11" width="2" height="2" fill="#4a7ab8"/></svg><div class="t" style="left:102px;top:358px;font-size:12px;color:#111;"><span style="font-size:15.0px;letter-spacing:0">断面図形</span> -</div><svg class="a" style="left:62px;top:374px;" width="17" height="16" viewBox="0 0 17 16"><rect x="1" y="2" width="4" height="12" rx="1.5" fill="#ddd" stroke="#999"/><path d="M6 8 H10" stroke="#333"/><rect x="11" y="1" width="5" height="14" fill="#b9c6f0" stroke="#c00" stroke-width="1.2"/></svg><div class="t" style="left:83px;top:376px;font-size:12px;color:#111;"><span style="font-size:15.0px;letter-spacing:0">従属</span><span style="font-size:13.0px;letter-spacing:0">インスタンス</span></div><svg class="a" style="left:24px;top:392px;" width="17" height="16" viewBox="0 0 17 16"><circle cx="5" cy="3.5" r="3" fill="#333"/><circle cx="11" cy="3.5" r="3" fill="#333"/><circle cx="5" cy="3.5" r="1.2" fill="#eee"/><circle cx="11" cy="3.5" r="1.2" fill="#eee"/><rect x="1" y="7" width="12" height="8" fill="#555" stroke="#111"/><path d="M13 9 L16 7 V15 L13 13" fill="#333"/><rect x="3" y="9" width="8" height="3" fill="#aab"/></svg><div class="t" style="left:45px;top:394px;font-size:12px;color:#111;"><span style="font-size:13.0px;letter-spacing:0">カメラ</span></div><svg class="a" style="left:24px;top:410px;" width="17" height="17" viewBox="0 0 17 17"><path d="M2 1 L10 9" stroke="#1b4fb0" stroke-width="2.2"/><ellipse cx="10" cy="11" rx="5" ry="4" transform="rotate(40 10 11)" fill="#efe6c0" stroke="#999"/><path d="M12 14 L16 16" stroke="#d00" stroke-width="1.2"/></svg><div class="t" style="left:45px;top:412px;font-size:12px;color:#111;"><span style="font-size:13.0px;letter-spacing:0">ライト</span></div></div><div class="a" style="left:0px;top:985px;width:59px;height:22px;background:#f7f7f7;border:1px solid #c8c8c8;border-top:none;"></div><svg class="a" style="left:7px;top:989px;" width="12" height="15" viewBox="0 0 12 15"><g fill="#c8f0a0" stroke="#5a8fc8" stroke-width="0.8"><rect x="5" y="1" width="2.5" height="2.5"/><rect x="2.5" y="6" width="2.5" height="2.5"/><rect x="7.5" y="6" width="2.5" height="2.5"/><rect x="0.5" y="11.5" width="2.5" height="2.5"/><rect x="5" y="11.5" width="2.5" height="2.5"/><rect x="9" y="11.5" width="2.5" height="2.5"/></g></svg><div class="t" style="left:22px;top:989px;font-size:12px;color:#222;"><span style="font-size:13.0px;letter-spacing:0">シーン</span></div><svg class="a" style="left:67px;top:988px;" width="12" height="16" viewBox="0 0 12 16"><rect x="0.5" y="0.5" width="11" height="15" fill="#fff" stroke="#555"/><rect x="2" y="2" width="5" height="5" fill="#2f6fd0"/><path d="M8 2V7 M3 10H9 M3 13H9" stroke="#555"/></svg><div class="t" style="left:83px;top:989px;font-size:12px;color:#222;"><span style="font-size:13.0px;letter-spacing:0">プロパテ</span><span style="font-size:10.0px;letter-spacing:0">ィ</span></div><svg class="a" style="left:141px;top:988px;" width="16" height="16" viewBox="0 0 16 16"><circle cx="6" cy="6" r="5" fill="#e4fbff" stroke="#444" stroke-width="1.3"/><path d="M10 10 L15 15" stroke="#444" stroke-width="2.2"/></svg><div class="t" style="left:159px;top:989px;font-size:12px;color:#222;"><span style="font-size:15.0px;letter-spacing:0">検索</span></div><svg class="a" style="left:281px;top:183px" width="1238" height="824" viewBox="281 183 1238 824"><rect x="281" y="183" width="1238" height="824" fill="url(#vpg)"/><defs><linearGradient id="vpg" gradientUnits="userSpaceOnUse" x1="0" y1="183" x2="0" y2="1007"><stop offset="0" stop-color="#4d71a0"/><stop offset="0.3" stop-color="#819dbe"/><stop offset="0.6" stop-color="#b4c4d7"/><stop offset="0.85" stop-color="#e2e8ef"/><stop offset="1" stop-color="#f8f9fb"/></linearGradient><linearGradient id="sideg" gradientUnits="userSpaceOnUse" x1="575" y1="0" x2="880" y2="0"><stop offset="0" stop-color="#9f9684"/><stop offset="0.35" stop-color="#b3ab98"/><stop offset="0.62" stop-color="#a9a08c"/><stop offset="0.78" stop-color="#ddd8c6"/><stop offset="0.9" stop-color="#e3dfcf"/><stop offset="1" stop-color="#cdc7b4"/></linearGradient><linearGradient id="wallg" x1="0" y1="0" x2="1" y2="0"><stop offset="0" stop-color="#857d6c"/><stop offset="0.3" stop-color="#b8b09d"/><stop offset="0.5" stop-color="#e9e6d6"/><stop offset="0.7" stop-color="#aaa290"/><stop offset="1" stop-color="#c0b9a6"/></linearGradient><radialGradient id="tbg" cx="0.4" cy="0.35" r="0.7"><stop offset="0" stop-color="#e8fbff"/><stop offset="1" stop-color="#55c8f0"/></radialGradient></defs><polygon points="572.2,569.9 580.3,537.6 596.5,506.1 620.1,476.9 650.0,451.1 685.0,430.0 723.5,414.4 763.8,405.0 804.2,402.3 842.9,406.3 878.2,416.9 908.6,433.7 932.7,455.8 949.6,482.3 958.6,508.3 967.3,538.1 967.6,569.9 959.5,602.2 943.3,633.7 919.7,662.9 889.8,688.7 854.8,709.8 816.3,725.4 776.0,734.8 735.6,737.5 696.9,733.5 661.6,722.9 631.2,706.1 607.1,684.0 590.2,657.5 581.2,631.5 572.5,601.7" fill="url(#sideg)" stroke="#00f4ff" stroke-width="2" stroke-linejoin="round"/><polygon points="958.3,512.1 958.6,543.9 950.5,576.2 934.3,607.7 910.7,636.9 880.8,662.7 845.8,683.8 807.3,699.4 767.0,708.8 726.6,711.5 687.9,707.5 652.6,696.9 622.2,680.1 598.1,658.0 581.2,631.5 572.5,601.7 572.2,569.9 580.3,537.6 596.5,506.1 620.1,476.9 650.0,451.1 685.0,430.0 723.5,414.4 763.8,405.0 804.2,402.3 842.9,406.3 878.2,416.9 908.6,433.7 932.7,455.8 949.6,482.3" fill="#7b7669" stroke="#00f4ff" stroke-width="2" stroke-linejoin="round"/><clipPath id="hc0"><polygon points="816.4,539.3 818.0,551.9 814.4,565.0 806.1,577.4 793.7,587.7 778.6,595.0 762.1,598.6 746.1,598.1 731.8,593.6 720.9,585.4 714.4,574.5 712.8,561.9 716.4,548.8 724.7,536.4 737.1,526.1 752.2,518.8 768.7,515.2 784.7,515.7 799.0,520.2 809.9,528.4"/></clipPath><polygon points="816.4,539.3 818.0,551.9 814.4,565.0 806.1,577.4 793.7,587.7 778.6,595.0 762.1,598.6 746.1,598.1 731.8,593.6 720.9,585.4 714.4,574.5 712.8,561.9 716.4,548.8 724.7,536.4 737.1,526.1 752.2,518.8 768.7,515.2 784.7,515.7 799.0,520.2 809.9,528.4" fill="url(#wallg)"/><g clip-path="url(#hc0)"><polygon points="825.4,565.3 827.0,577.9 823.4,591.0 815.1,603.4 802.7,613.7 787.6,621.0 771.1,624.6 755.1,624.1 740.8,619.6 729.9,611.4 723.4,600.5 721.8,587.9 725.4,574.8 733.7,562.4 746.1,552.1 761.2,544.8 777.7,541.2 793.7,541.7 808.0,546.2 818.9,554.4" fill="url(#vpg)" stroke="#00f4ff" stroke-width="2" stroke-linejoin="round"/></g><polygon points="816.4,539.3 818.0,551.9 814.4,565.0 806.1,577.4 793.7,587.7 778.6,595.0 762.1,598.6 746.1,598.1 731.8,593.6 720.9,585.4 714.4,574.5 712.8,561.9 716.4,548.8 724.7,536.4 737.1,526.1 752.2,518.8 768.7,515.2 784.7,515.7 799.0,520.2 809.9,528.4" fill="none" stroke="#00f4ff" stroke-width="2" stroke-linejoin="round"/><clipPath id="hc1"><polygon points="859.7,439.2 860.0,447.3 855.7,455.4 847.8,461.8 837.7,465.3 827.4,465.1 819.1,461.4 814.3,454.8 814.0,446.7 818.3,438.6 826.2,432.2 836.3,428.7 846.6,428.9 854.9,432.6"/></clipPath><polygon points="859.7,439.2 860.0,447.3 855.7,455.4 847.8,461.8 837.7,465.3 827.4,465.1 819.1,461.4 814.3,454.8 814.0,446.7 818.3,438.6 826.2,432.2 836.3,428.7 846.6,428.9 854.9,432.6" fill="url(#wallg)"/><g clip-path="url(#hc1)"><polygon points="868.7,465.2 869.0,473.3 864.7,481.4 856.8,487.8 846.7,491.3 836.4,491.1 828.1,487.4 823.3,480.8 823.0,472.7 827.3,464.6 835.2,458.2 845.3,454.7 855.6,454.9 863.9,458.6" fill="url(#vpg)" stroke="#00f4ff" stroke-width="2" stroke-linejoin="round"/></g><polygon points="859.7,439.2 860.0,447.3 855.7,455.4 847.8,461.8 837.7,465.3 827.4,465.1 819.1,461.4 814.3,454.8 814.0,446.7 818.3,438.6 826.2,432.2 836.3,428.7 846.6,428.9 854.9,432.6" fill="none" stroke="#00f4ff" stroke-width="2" stroke-linejoin="round"/><clipPath id="hc2"><polygon points="661.7,510.2 662.0,518.3 657.7,526.4 649.8,532.8 639.7,536.3 629.4,536.1 621.1,532.4 616.3,525.8 616.0,517.7 620.3,509.6 628.2,503.2 638.3,499.7 648.6,499.9 656.9,503.6"/></clipPath><polygon points="661.7,510.2 662.0,518.3 657.7,526.4 649.8,532.8 639.7,536.3 629.4,536.1 621.1,532.4 616.3,525.8 616.0,517.7 620.3,509.6 628.2,503.2 638.3,499.7 648.6,499.9 656.9,503.6" fill="url(#wallg)"/><g clip-path="url(#hc2)"><polygon points="670.7,536.2 671.0,544.3 666.7,552.4 658.8,558.8 648.7,562.3 638.4,562.1 630.1,558.4 625.3,551.8 625.0,543.7 629.3,535.6 637.2,529.2 647.3,525.7 657.6,525.9 665.9,529.6" fill="url(#vpg)" stroke="#00f4ff" stroke-width="2" stroke-linejoin="round"/></g><polygon points="661.7,510.2 662.0,518.3 657.7,526.4 649.8,532.8 639.7,536.3 629.4,536.1 621.1,532.4 616.3,525.8 616.0,517.7 620.3,509.6 628.2,503.2 638.3,499.7 648.6,499.9 656.9,503.6" fill="none" stroke="#00f4ff" stroke-width="2" stroke-linejoin="round"/><clipPath id="hc3"><polygon points="671.1,674.2 671.2,666.1 675.8,658.1 684.0,651.8 694.2,648.6 704.3,649.0 712.4,653.0 716.9,659.8 716.8,667.9 712.2,675.9 704.0,682.2 693.8,685.4 683.7,685.0 675.6,681.0"/></clipPath><polygon points="671.1,674.2 671.2,666.1 675.8,658.1 684.0,651.8 694.2,648.6 704.3,649.0 712.4,653.0 716.9,659.8 716.8,667.9 712.2,675.9 704.0,682.2 693.8,685.4 683.7,685.0 675.6,681.0" fill="url(#wallg)"/><g clip-path="url(#hc3)"><polygon points="680.1,700.2 680.2,692.1 684.8,684.1 693.0,677.8 703.2,674.6 713.3,675.0 721.4,679.0 725.9,685.8 725.8,693.9 721.2,701.9 713.0,708.2 702.8,711.4 692.7,711.0 684.6,707.0" fill="url(#vpg)" stroke="#00f4ff" stroke-width="2" stroke-linejoin="round"/></g><polygon points="671.1,674.2 671.2,666.1 675.8,658.1 684.0,651.8 694.2,648.6 704.3,649.0 712.4,653.0 716.9,659.8 716.8,667.9 712.2,675.9 704.0,682.2 693.8,685.4 683.7,685.0 675.6,681.0" fill="none" stroke="#00f4ff" stroke-width="2" stroke-linejoin="round"/><clipPath id="hc4"><polygon points="913.7,590.2 914.0,598.3 909.7,606.4 901.8,612.8 891.7,616.3 881.4,616.1 873.1,612.4 868.3,605.8 868.0,597.7 872.3,589.6 880.2,583.2 890.3,579.7 900.6,579.9 908.9,583.6"/></clipPath><polygon points="913.7,590.2 914.0,598.3 909.7,606.4 901.8,612.8 891.7,616.3 881.4,616.1 873.1,612.4 868.3,605.8 868.0,597.7 872.3,589.6 880.2,583.2 890.3,579.7 900.6,579.9 908.9,583.6" fill="url(#wallg)"/><g clip-path="url(#hc4)"><polygon points="922.7,616.2 923.0,624.3 918.7,632.4 910.8,638.8 900.7,642.3 890.4,642.1 882.1,638.4 877.3,631.8 877.0,623.7 881.3,615.6 889.2,609.2 899.3,605.7 909.6,605.9 917.9,609.6" fill="url(#vpg)" stroke="#00f4ff" stroke-width="2" stroke-linejoin="round"/></g><polygon points="913.7,590.2 914.0,598.3 909.7,606.4 901.8,612.8 891.7,616.3 881.4,616.1 873.1,612.4 868.3,605.8 868.0,597.7 872.3,589.6 880.2,583.2 890.3,579.7 900.6,579.9 908.9,583.6" fill="none" stroke="#00f4ff" stroke-width="2" stroke-linejoin="round"/><path d="M773 582 L780 572 M773 582 L792 588" stroke="#237878" stroke-width="1.8"/><circle cx="773" cy="582" r="3.3" fill="#156262" stroke="#0c3a3a" stroke-width="0.8"/><circle cx="762" cy="573" r="7.8" fill="url(#tbg)" stroke="#3557a8" stroke-width="1"/><circle cx="762" cy="566" r="0.9" fill="#e02020"/><circle cx="762" cy="572" r="0.9" fill="#e02020"/><circle cx="756" cy="576" r="0.9" fill="#e02020"/><circle cx="768" cy="576" r="0.9" fill="#e02020"/><path d="M318 970 L311 961 L313 957 L320 966Z" fill="#80f080" stroke="#1a8a1a" stroke-width="0.6"/><path d="M319 970 L324 962 L322 961 L328 957 L327 963 L325 963 Z" fill="#8a1010" stroke="#ff9a9a" stroke-width="0.7"/><path d="M318 971 L326 973 L328 972 L335 978 L326 978 L320 974Z" fill="#7f7ff8" stroke="#3030c0" stroke-width="0.4"/><text x="310" y="956" font-size="7" fill="#10e010" font-family="Liberation Mono" font-weight="bold">Y</text><text x="330" y="953" font-size="7" fill="#ff1010" font-family="Liberation Mono" font-weight="bold">X</text><text x="339" y="981" font-size="8" fill="#1010f0" font-family="Liberation Mono" font-weight="bold">Z</text></svg><div class="a" style="left:1519px;top:160px;width:401px;height:847px;background:#e6e6e6;"></div><div class="a" style="left:1521px;top:160px;width:3px;height:847px;background:#d6d6d6;"></div><div class="t" style="left:1527px;top:166px;font-size:13px;color:#333;"><span style="font-size:14.0px;letter-spacing:0">スタート</span></div><svg class="a" style="left:1886px;top:170px;" width="9" height="5" viewBox="0 0 9 5"><path d="M0 0H9L4.5 5Z" fill="#666"/></svg><svg class="a" style="left:1906px;top:168px;" width="7" height="10" viewBox="0 0 7 10"><path d="M1.5 0.5 H5.5 V5 H6.5 V6 H0.5 V5 H1.5Z M3.5 6 V10" fill="#777" stroke="#666"/></svg><div class="a" style="left:1527px;top:187px;width:76px;height:17px;background:#f2f2f2;border:1px solid #c6c6c6;border-radius:3px;"></div><div class="t" style="left:1552px;top:190px;font-size:12px;color:#111;width:46px;text-align:center;"><span style="font-size:15.0px;letter-spacing:0">新規</span></div><div class="a" style="left:1607px;top:187px;width:76px;height:17px;background:#f2f2f2;border:1px solid #c6c6c6;border-radius:3px;"></div><div class="t" style="left:1632px;top:190px;font-size:12px;color:#111;width:46px;text-align:center;"><span style="font-size:15.0px;letter-spacing:0">開</span><span style="font-size:14.0px;letter-spacing:0">く</span></div><div class="a" style="left:1687px;top:187px;width:76px;height:17px;background:#f2f2f2;border:1px solid #c6c6c6;border-radius:3px;"></div><div class="t" style="left:1712px;top:190px;font-size:12px;color:#111;width:46px;text-align:center;"><span style="font-size:15.0px;letter-spacing:0">保存</span></div><div class="a" style="left:1767px;top:187px;width:76px;height:17px;background:#f2f2f2;border:1px solid #c6c6c6;border-radius:3px;"></div><div class="t" style="left:1792px;top:190px;font-size:12px;color:#111;width:46px;text-align:center;"><span style="font-size:15.0px;letter-spacing:0">閉</span><span style="font-size:14.0px;letter-spacing:0">じる</span></div><div class="a" style="left:1847px;top:187px;width:72px;height:17px;background:#f2f2f2;border:1px solid #c6c6c6;border-radius:3px;"></div><svg class="a" style="left:1533px;top:189px;" width="14" height="14" viewBox="0 0 14 14"><rect x="0" y="0" width="14" height="14" fill="#ece7d0"/><rect x="2" y="1" width="9" height="12" fill="#fff" stroke="#555"/><g fill="#999"><rect x="4" y="4" width="2" height="2"/><rect x="7" y="4" width="2" height="2"/><rect x="4" y="8" width="2" height="2"/><rect x="7" y="8" width="2" height="2"/></g></svg><svg class="a" style="left:1613px;top:189px;" width="14" height="14" viewBox="0 0 14 14"><rect x="0" y="0" width="14" height="14" fill="#ece7d0"/><path d="M2 1 H8 V13 H2Z" fill="#eee" stroke="#777"/><path d="M2 1 L6 3 V14 L2 13" fill="#ccc" stroke="#777"/></svg><svg class="a" style="left:1693px;top:189px;" width="14" height="14" viewBox="0 0 14 14"><rect x="0" y="0" width="14" height="14" fill="#ece7d0"/><rect x="4" y="1" width="9" height="8" fill="#fff" stroke="#777"/><rect x="1" y="5" width="9" height="9" fill="#444"/><rect x="3" y="6" width="5" height="3" fill="#ddd"/></svg><svg class="a" style="left:1773px;top:189px;" width="14" height="14" viewBox="0 0 14 14"><rect x="0" y="0" width="14" height="14" fill="#ece7d0"/><rect x="2" y="1" width="9" height="11" fill="#e8e8e8" stroke="#888"/></svg><div class="a" style="left:1525px;top:205px;width:395px;height:22px;background:#ffffff;"></div><div class="t" style="left:1527px;top:207px;font-size:12px;color:#666;"><span style="font-size:15.0px;letter-spacing:0">検索</span>...</div><svg class="a" style="left:1901px;top:208px;" width="17" height="17" viewBox="0 0 17 17"><rect x="0.5" y="0.5" width="16" height="16" rx="3" fill="#ebe8dc" stroke="#ddd"/><path d="M3.5 3.5 L13.5 13.5 M13.5 3.5 L3.5 13.5" stroke="#f04a2a" stroke-width="1.8"/></svg><div class="a" style="left:1525px;top:227px;width:394px;height:738px;background:#ffffff;border:1px solid #828790;"></div><svg class="a" style="left:1562px;top:230px;" width="32" height="32" viewBox="0 0 32 32"><path d="M4 8 L16 4 L28 8 V24 L16 30 L4 24Z" fill="#c9dbd2"/><path d="M4 8 L16 4 L28 8 L16 12Z" fill="#e6f0ea"/><path d="M16 12 L28 8 V24 L16 30Z" fill="#aec4b8"/><path d="M4 8 L16 12 V30 L4 24Z" fill="#c2d6cb"/></svg><div class="t" style="left:1518px;top:266px;font-size:11px;color:#111;width:120px;text-align:center;"><span style="font-size:12.5px;letter-spacing:0">ブロ</span><span style="font-size:9.5px;letter-spacing:0">ッ</span><span style="font-size:12.5px;letter-spacing:0">ク</span></div><svg class="a" style="left:1662px;top:230px;" width="32" height="32" viewBox="0 0 32 32"><path d="M8 24 L16 30 L24 26 V20 H8Z" fill="#f2f2f2"/><path d="M1 12 L17 3 L31 12 L15 21Z" fill="#2a3580" stroke="#1a2260" stroke-width="0.6"/><path d="M7 12 L17 7 L25 12 L15 17Z" fill="#e8e8f0"/><path d="M7 12 L15 17 L16 12Z" fill="#a8a8bc"/><path d="M17 7 L16 12 L25 12Z" fill="#c8c8d8"/></svg><div class="t" style="left:1618px;top:266px;font-size:11px;color:#111;width:120px;text-align:center;"><span style="font-size:12.5px;letter-spacing:0">ブロ</span><span style="font-size:9.5px;letter-spacing:0">ッ</span><span style="font-size:12.5px;letter-spacing:0">ク</span> <span style="font-size:14.5px;letter-spacing:0">穴</span></div><svg class="a" style="left:1762px;top:230px;" width="32" height="32" viewBox="0 0 32 32"><path d="M3 8 V25 Q16 33 29 25 V8" fill="#c2d6cc"/><path d="M16 12 Q24 12 29 8 V25 Q24 29 16 30Z" fill="#adc4b8"/><ellipse cx="16" cy="8" rx="13" ry="6" fill="#e0ece6"/></svg><div class="t" style="left:1718px;top:266px;font-size:11px;color:#111;width:120px;text-align:center;"><span style="font-size:14.5px;letter-spacing:0">円柱</span></div><svg class="a" style="left:1562px;top:305px;" width="32" height="32" viewBox="0 0 32 32"><path d="M16 3 L30 13 L16 23 L2 13Z" fill="#2a3580" stroke="#1a2260"/><ellipse cx="16" cy="13" rx="8" ry="5" fill="#e6e6ee"/><path d="M8 13 Q16 7 24 13" fill="#9a9ab0"/><path d="M9 19 L16 29 L23 19" fill="#f4f4f4" stroke="#ddd" stroke-width="0.6"/></svg><div class="t" style="left:1518px;top:341px;font-size:11px;color:#111;width:120px;text-align:center;"><span style="font-size:14.5px;letter-spacing:0">円柱</span> <span style="font-size:14.5px;letter-spacing:0">穴</span></div><svg class="a" style="left:1662px;top:305px;" width="32" height="32" viewBox="0 0 32 32"><path d="M6 8 V24 Q8 30 14 30 H22 Q28 28 27 22 V9" fill="#c4d8cf"/><path d="M6 8 Q6 3 12 3 H21 Q27 4 27 9 Q26 13 21 13 H12 Q6 13 6 8Z" fill="#e2eee8"/></svg><div class="t" style="left:1618px;top:341px;font-size:11px;color:#111;width:120px;text-align:center;"><span style="font-size:12.5px;letter-spacing:0">スロ</span><span style="font-size:9.5px;letter-spacing:0">ッ</span><span style="font-size:12.5px;letter-spacing:0">ト</span></div><svg class="a" style="left:1762px;top:305px;" width="32" height="32" viewBox="0 0 32 32"><path d="M5 3 L30 9 L24 25 L2 17Z" fill="#2a3580"/><path d="M10 8 Q12 5 17 7 L23 10 Q26 13 23 16 Q20 19 15 16 L10 13 Q7 11 10 8Z" fill="#e6e6ee"/><path d="M8 17 L14 28 L22 24" fill="#f4f4f4"/></svg><div class="t" style="left:1718px;top:341px;font-size:11px;color:#111;width:120px;text-align:center;"><span style="font-size:12.5px;letter-spacing:0">スロ</span><span style="font-size:9.5px;letter-spacing:0">ッ</span><span style="font-size:12.5px;letter-spacing:0">ト</span> <span style="font-size:14.5px;letter-spacing:0">穴</span></div><svg class="a" style="left:1562px;top:380px;" width="32" height="32" viewBox="0 0 32 32"><path d="M4 10 V25 Q16 32 28 24 V8" fill="#c4d8cf"/><ellipse cx="16" cy="9" rx="12" ry="6" transform="rotate(-12 16 9)" fill="#e2eee8"/></svg><div class="t" style="left:1518px;top:416px;font-size:11px;color:#111;width:120px;text-align:center;"><span style="font-size:14.5px;letter-spacing:0">楕円柱</span></div><svg class="a" style="left:1662px;top:380px;" width="32" height="32" viewBox="0 0 32 32"><path d="M16 3 L30 13 L16 23 L2 13Z" fill="#2a3580" stroke="#1a2260"/><ellipse cx="16" cy="13" rx="8" ry="5" fill="#e6e6ee"/><path d="M8 13 Q16 7 24 13" fill="#9a9ab0"/><path d="M9 19 L16 29 L23 19" fill="#f4f4f4" stroke="#ddd" stroke-width="0.6"/></svg><div class="t" style="left:1618px;top:416px;font-size:11px;color:#111;width:120px;text-align:center;"><span style="font-size:14.5px;letter-spacing:0">楕円柱</span> <span style="font-size:14.5px;letter-spacing:0">穴</span></div><svg class="a" style="left:1762px;top:380px;" width="32" height="32" viewBox="0 0 32 32"><path d="M3 12 L11 3 L24 3 L30 12 L22 27 H10Z" fill="#bcd4c8"/><path d="M3 12 L11 3 L24 3 L30 12 L18 16Z" fill="#d6e6de"/><path d="M18 16 L30 12 L22 27 Z" fill="#a8c0b4"/></svg><div class="t" style="left:1718px;top:416px;font-size:11px;color:#111;width:120px;text-align:center;"><span style="font-size:14.5px;letter-spacing:0">多角柱</span></div><svg class="a" style="left:1562px;top:455px;" width="32" height="32" viewBox="0 0 32 32"><path d="M6 3 L30 3 L22 25 L1 21Z" fill="#2a3580"/><path d="M12 8 L20 6 L24 12 L18 19 L10 17 L8 11Z" fill="#e6e6ee"/><path d="M10 21 L16 29 L22 25" fill="#f4f4f4"/></svg><div class="t" style="left:1518px;top:491px;font-size:11px;color:#111;width:120px;text-align:center;"><span style="font-size:14.5px;letter-spacing:0">多角柱</span> <span style="font-size:14.5px;letter-spacing:0">穴</span></div><svg class="a" style="left:1662px;top:455px;" width="32" height="32" viewBox="0 0 32 32"><circle cx="16" cy="16" r="13.5" fill="#a8c4c0"/><circle cx="15" cy="15" r="11" fill="#c8dcd8"/><circle cx="13" cy="13" r="6" fill="#e4f0ee"/><path d="M10 19 Q16 23 22 17" stroke="#8ab0b0" fill="none" stroke-width="1.5"/></svg><div class="t" style="left:1618px;top:491px;font-size:11px;color:#111;width:120px;text-align:center;"><span style="font-size:14.5px;letter-spacing:0">球</span></div><svg class="a" style="left:1762px;top:455px;" width="32" height="32" viewBox="0 0 32 32"><path d="M2 16 L22 3 L30 5 L26 22Z" fill="#2a3580"/><path d="M9 15 Q12 6 22 6 Q30 8 27 18 Q22 28 14 24 Q8 20 9 15Z" fill="#dde0ee" stroke="#9aa" stroke-width="0.6"/></svg><div class="t" style="left:1718px;top:491px;font-size:11px;color:#111;width:120px;text-align:center;"><span style="font-size:14.5px;letter-spacing:0">球</span> <span style="font-size:14.5px;letter-spacing:0">穴</span></div><svg class="a" style="left:1562px;top:530px;" width="32" height="32" viewBox="0 0 32 32"><path d="M6 10 L13 4" stroke="#b4cebf" stroke-width="3.4" stroke-linecap="round"/><path d="M14 8 L21 2" stroke="#b4cebf" stroke-width="3.4" stroke-linecap="round"/><path d="M22 6 L29 0" stroke="#b4cebf" stroke-width="3.4" stroke-linecap="round"/><path d="M6 18 L13 12" stroke="#b4cebf" stroke-width="3.4" stroke-linecap="round"/><path d="M14 16 L21 10" stroke="#b4cebf" stroke-width="3.4" stroke-linecap="round"/><path d="M22 14 L29 8" stroke="#b4cebf" stroke-width="3.4" stroke-linecap="round"/><path d="M6 26 L13 20" stroke="#b4cebf" stroke-width="3.4" stroke-linecap="round"/><path d="M14 24 L21 18" stroke="#b4cebf" stroke-width="3.4" stroke-linecap="round"/><path d="M22 22 L29 16" stroke="#b4cebf" stroke-width="3.4" stroke-linecap="round"/><ellipse cx="6" cy="10" rx="3" ry="2.6" fill="#9fbcad"/><ellipse cx="14" cy="8" rx="3" ry="2.6" fill="#9fbcad"/><ellipse cx="22" cy="6" rx="3" ry="2.6" fill="#9fbcad"/><ellipse cx="6" cy="18" rx="3" ry="2.6" fill="#9fbcad"/><ellipse cx="14" cy="16" rx="3" ry="2.6" fill="#9fbcad"/><ellipse cx="22" cy="14" rx="3" ry="2.6" fill="#9fbcad"/><ellipse cx="6" cy="26" rx="3" ry="2.6" fill="#9fbcad"/><ellipse cx="14" cy="24" rx="3" ry="2.6" fill="#9fbcad"/><ellipse cx="22" cy="22" rx="3" ry="2.6" fill="#9fbcad"/></svg><div class="t" style="left:1518px;top:566px;font-size:11px;color:#111;width:120px;text-align:center;"><span style="font-size:12.5px;letter-spacing:0">ボルト</span> <span style="font-size:14.5px;letter-spacing:0">角形</span></div><svg class="a" style="left:1662px;top:530px;" width="32" height="32" viewBox="0 0 32 32"><path d="M6 3 L30 3 L25 22 L1 22Z" fill="#2a3580"/><g fill="#ffffff"><circle cx="11" cy="8" r="1.6"/><circle cx="17" cy="8" r="1.6"/><circle cx="23" cy="8" r="1.6"/><circle cx="9" cy="13" r="1.6"/><circle cx="15" cy="13" r="1.6"/><circle cx="21" cy="13" r="1.6"/><circle cx="7" cy="18" r="1.6"/><circle cx="13" cy="18" r="1.6"/><circle cx="19" cy="18" r="1.6"/></g><path d="M25 22 L29 26 L27 29" fill="#ddd"/></svg><div class="t" style="left:1618px;top:566px;font-size:11px;color:#111;width:120px;text-align:center;"><span style="font-size:12.5px;letter-spacing:0">ボルト</span> <span style="font-size:14.5px;letter-spacing:0">穴</span> <span style="font-size:14.5px;letter-spacing:0">角形</span></div><svg class="a" style="left:1762px;top:530px;" width="32" height="32" viewBox="0 0 32 32"><path d="M5 14 V20 Q16 27 27 20 V14Z" fill="#c8ccd0"/><path d="M16 21 Q22 21 27 18 V20 Q22 24 16 24Z" fill="#a8b0b4"/><ellipse cx="16" cy="14" rx="11" ry="5.5" fill="#f0f0f0" stroke="#ccc" stroke-width="0.5"/><ellipse cx="16" cy="13.5" rx="3.2" ry="1.8" fill="#777"/><path d="M16 19 V25" stroke="#8cc" stroke-width="0.6"/></svg><div class="t" style="left:1718px;top:566px;font-size:11px;color:#111;width:120px;text-align:center;"><span style="font-size:12.5px;letter-spacing:0">スピン</span></div><svg class="a" style="left:1562px;top:605px;" width="32" height="32" viewBox="0 0 32 32"><ellipse cx="16" cy="14" rx="11" ry="7" fill="#2a3580"/><path d="M5 14 V19 Q16 27 27 19 V14" fill="#2a3580"/><ellipse cx="16" cy="14" rx="7" ry="4" fill="#d0d4e8"/></svg><div class="t" style="left:1518px;top:641px;font-size:11px;color:#111;width:120px;text-align:center;"><span style="font-size:12.5px;letter-spacing:0">スピン</span> <span style="font-size:14.5px;letter-spacing:0">穴</span></div><svg class="a" style="left:1662px;top:605px;" width="32" height="32" viewBox="0 0 32 32"><path d="M16 4 L28 12 L16 20 L4 12Z" fill="#2a3580"/><path d="M4 16 L16 24 L28 16 L28 18 L16 28 L4 18Z" fill="#2a3580"/><ellipse cx="16" cy="12" rx="4" ry="2.5" fill="#c8cce0"/></svg><div class="t" style="left:1618px;top:641px;font-size:11px;color:#111;width:120px;text-align:center;"><span style="font-size:14.5px;letter-spacing:0">貫通穴</span> <span style="font-size:14.5px;letter-spacing:0">円形</span></div><svg class="a" style="left:1762px;top:605px;" width="32" height="32" viewBox="0 0 32 32"><path d="M16 4 L28 12 L16 20 L4 12Z" fill="#2a3580"/><path d="M4 16 L16 24 L28 16 L28 18 L16 28 L4 18Z" fill="#2a3580"/><path d="M16 8 L22 12 L16 16 L10 12Z" fill="#c8cce0"/></svg><div class="t" style="left:1718px;top:641px;font-size:11px;color:#111;width:120px;text-align:center;"><span style="font-size:14.5px;letter-spacing:0">貫通穴</span> <span style="font-size:14.5px;letter-spacing:0">角形</span></div><svg class="a" style="left:1562px;top:680px;" width="32" height="32" viewBox="0 0 32 32"><rect x="2" y="2" width="28" height="28" fill="#fff" stroke="#111" stroke-width="2"/><path d="M13 18 V11 M11 13 L13 10 L15 13" stroke="#2a2" fill="none" stroke-width="1.2"/><path d="M13 18 H20 M18 16 L21 18 L18 20" stroke="#e22" fill="none" stroke-width="1.2"/></svg><div class="a" style="left:1528px;top:716px;width:100px;text-align:center;font-size:11px;line-height:15px;color:#111;">2D<span style="font-size:14.5px;letter-spacing:0">図形</span> - <span style="font-size:14.5px;letter-spacing:0">原点</span><span style="font-size:13.5px;letter-spacing:0">が</span><span style="font-size:14.5px;letter-spacing:0">図</span><br><span style="font-size:13.5px;letter-spacing:0">の</span><span style="font-size:14.5px;letter-spacing:0">中央</span></div><svg class="a" style="left:1662px;top:680px;" width="32" height="32" viewBox="0 0 32 32"><rect x="2" y="2" width="28" height="28" fill="#fff" stroke="#111" stroke-width="2"/><path d="M2 30 V24 M0.5 26 L2 23 L3.5 26" stroke="#2a2" fill="none" stroke-width="1.2"/><path d="M2 30 H8 M6 28.5 L9 30 L6 31.5" stroke="#e22" fill="none" stroke-width="1.2"/></svg><div class="a" style="left:1628px;top:716px;width:100px;text-align:center;font-size:11px;line-height:15px;color:#111;">2D<span style="font-size:14.5px;letter-spacing:0">図形</span> - <span style="font-size:14.5px;letter-spacing:0">原点</span><span style="font-size:13.5px;letter-spacing:0">が</span><span style="font-size:14.5px;letter-spacing:0">図</span><br><span style="font-size:13.5px;letter-spacing:0">の</span><span style="font-size:14.5px;letter-spacing:0">角</span></div><svg class="a" style="left:1762px;top:680px;" width="32" height="32" viewBox="0 0 32 32"><path d="M2 4 H12 L14 7 H30 V28 H2Z" fill="#8fb8d8"/><path d="M2 9 H30 V28 H2Z" fill="#a9cde8"/><path d="M9 15 L16 12 L23 15 L16 18Z" fill="#fff"/><path d="M9 17 L16 20 L23 17 V20 L16 24 L9 20Z" fill="#222"/><path d="M16 18 L23 15 V17 L16 20Z" fill="#ddd"/></svg><div class="t" style="left:1718px;top:716px;font-size:11px;color:#111;width:120px;text-align:center;"><span style="font-size:12.5px;letter-spacing:0">ツール</span></div><svg class="a" style="left:1562px;top:755px;" width="32" height="32" viewBox="0 0 32 32"><path d="M2 4 H12 L14 7 H30 V28 H2Z" fill="#8fb8d8"/><path d="M2 9 H30 V28 H2Z" fill="#a9cde8"/><path d="M9 15 L16 12 L23 15 L16 18Z" fill="#fff"/><path d="M9 17 L16 20 L23 17 V20 L16 24 L9 20Z" fill="#222"/><path d="M16 18 L23 15 V17 L16 20Z" fill="#ddd"/></svg><div class="t" style="left:1518px;top:791px;font-size:11px;color:#111;width:120px;text-align:center;"><span style="font-size:14.5px;letter-spacing:0">板金</span></div><svg class="a" style="left:1662px;top:755px;" width="32" height="32" viewBox="0 0 32 32"><path d="M2 4 H12 L14 7 H30 V28 H2Z" fill="#8fb8d8"/><path d="M2 9 H30 V28 H2Z" fill="#a9cde8"/><path d="M9 15 L16 12 L23 15 L16 18Z" fill="#fff"/><path d="M9 17 L16 20 L23 17 V20 L16 24 L9 20Z" fill="#222"/><path d="M16 18 L23 15 V17 L16 20Z" fill="#ddd"/></svg><div class="t" style="left:1618px;top:791px;font-size:11px;color:#111;width:120px;text-align:center;"><span style="font-size:14.5px;letter-spacing:0">多角柱</span> </div><svg class="a" style="left:1762px;top:755px;" width="32" height="32" viewBox="0 0 32 32"><path d="M2 4 H12 L14 7 H30 V28 H2Z" fill="#8fb8d8"/><path d="M2 9 H30 V28 H2Z" fill="#a9cde8"/><path d="M9 15 L16 12 L23 15 L16 18Z" fill="#fff"/><path d="M9 17 L16 20 L23 17 V20 L16 24 L9 20Z" fill="#222"/><path d="M16 18 L23 15 V17 L16 20Z" fill="#ddd"/></svg><div class="t" style="left:1718px;top:791px;font-size:11px;color:#111;width:120px;text-align:center;"><span style="font-size:14.5px;letter-spacing:0">付加的</span><span style="font-size:13.5px;letter-spacing:0">な</span><span style="font-size:14.5px;letter-spacing:0">形状</span></div><svg class="a" style="left:1562px;top:830px;" width="32" height="32" viewBox="0 0 32 32"><path d="M2 4 H12 L14 7 H30 V28 H2Z" fill="#8fb8d8"/><path d="M2 9 H30 V28 H2Z" fill="#a9cde8"/><path d="M9 15 L16 12 L23 15 L16 18Z" fill="#fff"/><path d="M9 17 L16 20 L23 17 V20 L16 24 L9 20Z" fill="#222"/><path d="M16 18 L23 15 V17 L16 20Z" fill="#ddd"/></svg><div class="t" style="left:1518px;top:866px;font-size:11px;color:#111;width:120px;text-align:center;"><span style="font-size:12.5px;letter-spacing:0">マテリアル</span></div><svg class="a" style="left:1662px;top:830px;" width="32" height="32" viewBox="0 0 32 32"><path d="M2 4 H12 L14 7 H30 V28 H2Z" fill="#8fb8d8"/><path d="M2 9 H30 V28 H2Z" fill="#a9cde8"/><path d="M9 15 L16 12 L23 15 L16 18Z" fill="#fff"/><path d="M9 17 L16 20 L23 17 V20 L16 24 L9 20Z" fill="#222"/><path d="M16 18 L23 15 V17 L16 20Z" fill="#ddd"/></svg><div class="t" style="left:1618px;top:866px;font-size:11px;color:#111;width:120px;text-align:center;"><span style="font-size:14.5px;letter-spacing:0">色</span></div><svg class="a" style="left:1762px;top:830px;" width="32" height="32" viewBox="0 0 32 32"><path d="M2 4 H12 L14 7 H30 V28 H2Z" fill="#8fb8d8"/><path d="M2 9 H30 V28 H2Z" fill="#a9cde8"/><path d="M9 15 L16 12 L23 15 L16 18Z" fill="#fff"/><path d="M9 17 L16 20 L23 17 V20 L16 24 L9 20Z" fill="#222"/><path d="M16 18 L23 15 V17 L16 20Z" fill="#ddd"/></svg><div class="t" style="left:1718px;top:866px;font-size:11px;color:#111;width:120px;text-align:center;"><span style="font-size:14.5px;letter-spacing:0">入門動画</span> (<span style="font-size:14.5px;letter-spacing:0">英語</span>)</div><svg class="a" style="left:1562px;top:905px;" width="32" height="32" viewBox="0 0 32 32"><path d="M6 5 L24 2 L28 4 V28 L10 31 L6 29Z" fill="#111"/><path d="M24 2 L28 4 L10 7 L6 5Z" fill="#666"/><text x="9" y="25" font-size="14" font-weight="bold" fill="#fff" font-family="Liberation Sans">UG</text></svg><div class="t" style="left:1518px;top:941px;font-size:11px;color:#111;width:120px;text-align:center;"><span style="font-size:12.5px;letter-spacing:0">ユーザーガイド</span></div><svg class="a" style="left:1662px;top:905px;" width="32" height="32" viewBox="0 0 32 32"><path d="M2 4 H12 L14 7 H30 V28 H2Z" fill="#8fb8d8"/><path d="M2 9 H30 V28 H2Z" fill="#a9cde8"/><path d="M9 15 L16 12 L23 15 L16 18Z" fill="#fff"/><path d="M9 17 L16 20 L23 17 V20 L16 24 L9 20Z" fill="#222"/><path d="M16 18 L23 15 V17 L16 20Z" fill="#ddd"/></svg><div class="t" style="left:1618px;top:941px;font-size:11px;color:#111;width:120px;text-align:center;"><span style="font-size:14.5px;letter-spacing:0">更新</span><span style="font-size:12.5px;letter-spacing:0">プログラム</span></div><svg class="a" style="left:1762px;top:905px;" width="32" height="32" viewBox="0 0 32 32"><path d="M2 4 H12 L14 7 H30 V28 H2Z" fill="#8fb8d8"/><path d="M2 9 H30 V28 H2Z" fill="#a9cde8"/><path d="M9 15 L16 12 L23 15 L16 18Z" fill="#fff"/><path d="M9 17 L16 20 L23 17 V20 L16 24 L9 20Z" fill="#222"/><path d="M16 18 L23 15 V17 L16 20Z" fill="#ddd"/></svg><div class="t" style="left:1718px;top:941px;font-size:11px;color:#111;width:120px;text-align:center;"><span style="font-size:13.5px;letter-spacing:0">お</span><span style="font-size:14.5px;letter-spacing:0">気</span><span style="font-size:13.5px;letter-spacing:0">に</span><span style="font-size:14.5px;letter-spacing:0">入</span><span style="font-size:13.5px;letter-spacing:0">り</span></div><div class="a" style="left:1527px;top:966px;width:56px;height:17px;background:#ececec;border:1px solid #cfcfcf;border-radius:3px;"></div><svg class="a" style="left:1533px;top:969px;" width="14" height="11" viewBox="0 0 14 11"><path d="M0 5.5 L6 0 V3 H14 V8 H6 V11Z" fill="#aaa"/></svg><div class="t" style="left:1553px;top:968px;font-size:12px;color:#888;"><span style="font-size:15.0px;letter-spacing:0">戻</span><span style="font-size:14.0px;letter-spacing:0">る</span></div><div class="a" style="left:1587px;top:966px;width:118px;height:17px;background:#f4f4f4;border:1px solid #c6c6c6;border-radius:3px;"></div><div class="t" style="left:1587px;top:968px;font-size:12px;color:#111;width:118px;text-align:center;"><span style="font-size:14.0px;letter-spacing:0">すべての</span><span style="font-size:13.0px;letter-spacing:0">カタログ</span></div><div class="a" style="left:1709px;top:966px;width:209px;height:17px;background:#f4f4f4;border:1px solid #c6c6c6;border-radius:3px;"></div><div class="a" style="left:1525px;top:985px;width:50px;height:22px;background:#fdfdfd;border:1px solid #c8c8c8;border-top:none;"></div><div class="t" style="left:1529px;top:988px;font-size:12px;color:#333;"><span style="font-size:13.0px;letter-spacing:0">スタート</span></div><div class="t" style="left:1583px;top:988px;font-size:12px;color:#333;"><span style="font-size:13.0px;letter-spacing:0">シ</span><span style="font-size:10.0px;letter-spacing:0">ェ</span><span style="font-size:13.0px;letter-spacing:0">イプ</span></div><div class="t" style="left:1634px;top:988px;font-size:12px;color:#333;"><span style="font-size:15.0px;letter-spacing:0">拡張</span><span style="font-size:13.0px;letter-spacing:0">シ</span><span style="font-size:10.0px;letter-spacing:0">ェ</span><span style="font-size:13.0px;letter-spacing:0">イプ</span></div><div class="t" style="left:1710px;top:988px;font-size:12px;color:#333;"><span style="font-size:13.0px;letter-spacing:0">フレキシブル</span> <span style="font-size:13.0px;letter-spacing:0">シ</span><span style="font-size:10.0px;letter-spacing:0">ェ</span><span style="font-size:13.0px;letter-spacing:0">イプ</span></div><div class="t" style="left:1827px;top:988px;font-size:12px;color:#333;"><span style="font-size:15.0px;letter-spacing:0">板金</span></div><div class="t" style="left:1866px;top:988px;font-size:12px;color:#333;"><span style="font-size:15.0px;letter-spacing:0">表面</span></div><svg class="a" style="left:1904px;top:993px;" width="9" height="6" viewBox="0 0 9 6"><path d="M0 0.5H9" stroke="#666"/><path d="M0 2H9L4.5 6Z" fill="#666"/></svg><div class="a" style="left:0px;top:1007px;width:1920px;height:25px;background:#fcfcfc;border-top:1px solid #dadada;"></div><div class="t" style="left:3px;top:1013px;font-size:12px;color:#222;">F1 <span style="font-size:13.0px;letter-spacing:0">キー</span><span style="font-size:14.0px;letter-spacing:0">を</span><span style="font-size:15.0px;letter-spacing:0">押</span><span style="font-size:14.0px;letter-spacing:0">すと</span><span style="font-size:13.0px;letter-spacing:0">ヘルプ</span><span style="font-size:14.0px;letter-spacing:0">を</span><span style="font-size:15.0px;letter-spacing:0">表示</span><span style="font-size:14.0px;letter-spacing:0">します</span><span style="font-size:13.0px;letter-spacing:0">。</span></div><div class="t" style="left:994px;top:1013px;font-size:12px;color:#222;"><span style="font-size:13.0px;letter-spacing:0">ビ</span><span style="font-size:10.0px;letter-spacing:0">ュ</span><span style="font-size:13.0px;letter-spacing:0">ーサイズ</span>: 1240 x &nbsp;827</div><svg class="a" style="left:1132px;top:1011px;" width="10" height="16" viewBox="0 0 10 16"><rect x="3" y="1" width="5" height="14" fill="#f5c040" stroke="#b08000" stroke-width="0.6"/><path d="M3 4H6 M3 7H6 M3 10H6 M3 13H6" stroke="#885500" stroke-width="0.6"/><rect x="0" y="3" width="2" height="2" fill="#e0a000"/></svg><div class="t" style="left:1149px;top:1013px;font-size:12px;color:#111;font-weight:bold;"><span style="font-size:15.0px;letter-spacing:0">単位</span>:</div><div class="t" style="left:1191px;top:1013px;font-size:12px;color:#222;">mm, deg</div><svg class="a" style="left:1252px;top:1012px;" width="16" height="17" viewBox="0 0 16 17"><circle cx="6" cy="6" r="5" fill="#fff" stroke="#555" stroke-width="1.2"/><path d="M9.5 9.5 L14 14" stroke="#555" stroke-width="2"/><path d="M4 4 H8 V8" stroke="#888" fill="none"/></svg><svg class="a" style="left:1275px;top:1012px;" width="16" height="17" viewBox="0 0 16 17"><circle cx="6" cy="6" r="5" fill="#fff" stroke="#555" stroke-width="1.2"/><path d="M9.5 9.5 L14 14" stroke="#555" stroke-width="2"/></svg><svg class="a" style="left:1310px;top:1012px;" width="16" height="17" viewBox="0 0 16 17"><path d="M1 6 L4 3 H12 V11 L9 14 H1Z" fill="#f5cf3a" stroke="#555" stroke-width="0.8"/><circle cx="13" cy="8" r="1.3" fill="#d22"/></svg><svg class="a" style="left:1345px;top:1012px;" width="16" height="17" viewBox="0 0 16 17"><path d="M1 5 L5 1 H15 V12 L11 16 H1Z" fill="#4a90d9" stroke="#2a5a99" stroke-width="0.8"/><path d="M1 5 H11 V16 M11 5 L15 1" stroke="#d8ecff" fill="none" stroke-width="0.8"/></svg><svg class="a" style="left:1380px;top:1012px;" width="16" height="17" viewBox="0 0 16 17"><circle cx="3" cy="7" r="1.2" fill="#333"/><rect x="6" y="5" width="8" height="8" fill="#4a90d9" stroke="#222" stroke-width="0.8"/><circle cx="10" cy="3" r="1.5" fill="#222"/></svg><svg class="a" style="left:1415px;top:1012px;" width="16" height="17" viewBox="0 0 16 17"><path d="M1 9 L10 3 L15 3 L15 10 L6 15 L1 15Z" fill="#5c9ee0" stroke="#3a6aa8" stroke-width="0.8"/></svg><svg class="a" style="left:1440px;top:1012px;" width="16" height="17" viewBox="0 0 16 17"><circle cx="5" cy="10" r="3.5" fill="none" stroke="#777"/><circle cx="12" cy="9" r="3.5" fill="none" stroke="#777"/><path d="M1 4 L4 7 M8 9 H9" stroke="#777"/></svg><svg class="a" style="left:1473px;top:1012px;" width="16" height="17" viewBox="0 0 16 17"><path d="M1 5 L5 1 H15 V12 L11 16 H1Z" fill="#2a78d8" stroke="#154a99" stroke-width="0.8"/><path d="M1 5 H11 V16 M11 5 L15 1" stroke="#a8d0ff" fill="none" stroke-width="0.8"/></svg><svg class="a" style="left:1505px;top:1012px;" width="16" height="17" viewBox="0 0 16 17"><path d="M2 8 Q2 3 8 3 H12 M10 1 L13 3 L10 6" stroke="#bbb" fill="none" stroke-width="1.5"/><path d="M9 9 L9 16 L11 14 L13 17" stroke="#aaa" fill="none"/></svg><svg class="a" style="left:1300px;top:1019px;" width="6" height="4" viewBox="0 0 6 4"><path d="M0 0H6L3 3.5Z" fill="#444"/></svg><svg class="a" style="left:1336px;top:1019px;" width="6" height="4" viewBox="0 0 6 4"><path d="M0 0H6L3 3.5Z" fill="#444"/></svg><svg class="a" style="left:1371px;top:1019px;" width="6" height="4" viewBox="0 0 6 4"><path d="M0 0H6L3 3.5Z" fill="#444"/></svg><svg class="a" style="left:1407px;top:1019px;" width="6" height="4" viewBox="0 0 6 4"><path d="M0 0H6L3 3.5Z" fill="#444"/></svg><svg class="a" style="left:1462px;top:1019px;" width="6" height="4" viewBox="0 0 6 4"><path d="M0 0H6L3 3.5Z" fill="#444"/></svg><svg class="a" style="left:1497px;top:1019px;" width="6" height="4" viewBox="0 0 6 4"><path d="M0 0H6L3 3.5Z" fill="#444"/></svg><div class="a" style="left:1525px;top:1011px;width:23px;height:21px;background:#d9d9d9;"></div><svg class="a" style="left:1530px;top:1013px;" width="12" height="16" viewBox="0 0 12 16"><path d="M1 1 V14 L4.5 10.5 L7 15.5 L9 14.5 L6.5 9.5 H11Z" fill="#fff" stroke="#222" stroke-width="1"/></svg><svg class="a" style="left:1552px;top:1013px;" width="18" height="17" viewBox="0 0 18 17"><rect x="0.5" y="0.5" width="11" height="9" fill="none" stroke="#bbb"/><path d="M8 5 V16 L10.5 13.5 L12.5 17 L14 16 L12 12.5 H15Z" fill="#fff" stroke="#222" stroke-width="0.9"/></svg><div class="a" style="left:1573px;top:1012px;width:140px;height:19px;background:#ffffff;border:1px solid #cfcfcf;"></div><div class="t" style="left:1576px;top:1015px;font-size:13px;color:#111;"><span style="font-size:16.0px;letter-spacing:0">任意</span></div><svg class="a" style="left:1703px;top:1020px;" width="6" height="4" viewBox="0 0 6 4"><path d="M0 0H6L3 3.5Z" fill="#555"/></svg><div class="a" style="left:1714px;top:1012px;width:181px;height:19px;background:#ffffff;border:1px solid #cfcfcf;"></div><div class="t" style="left:1717px;top:1015px;font-size:13px;color:#111;">Default</div><svg class="a" style="left:1884px;top:1020px;" width="6" height="4" viewBox="0 0 6 4"><path d="M0 0H6L3 3.5Z" fill="#555"/></svg><svg class="a" style="left:1899px;top:1013px;" width="16" height="16" viewBox="0 0 16 16"><rect x="6" y="1" width="5" height="4" fill="#e81010"/><path d="M8.5 5 V8 M3 8 H14 M3 8 V10 M14 8 V10" stroke="#1e50c0" fill="none"/><rect x="1" y="10" width="5" height="5" fill="#6aa0e0" stroke="#2a5aa8" stroke-width="0.6"/><rect x="10" y="10" width="5" height="5" fill="#f5cf3a" stroke="#a08000" stroke-width="0.6"/></svg><div class="a" style="left:0px;top:1032px;width:1920px;height:48px;background:#1f2830;"></div><svg class="a" style="left:20px;top:1045px;" width="24" height="22" viewBox="0 0 24 22"><circle cx="8" cy="8" r="6" fill="#f5c030"/><path d="M4 20 Q0 20 0 16 Q0 11 6 12 Q8 6 14 7 Q20 7 21 12 Q24 13 24 16 Q24 20 20 20Z" fill="#e8eef5"/></svg><div class="t" style="left:51px;top:1042px;font-size:12px;color:#fff;">22°C</div><div class="t" style="left:51px;top:1058px;font-size:12px;color:#fff;"><span style="font-size:13.0px;letter-spacing:0">くもりのち</span><span style="font-size:14.0px;letter-spacing:0">晴</span><span style="font-size:13.0px;letter-spacing:0">れ</span></div><div class="a" style="left:1095px;top:1036px;width:40px;height:40px;background:#2e3842;border-radius:4px;"></div><svg class="a" style="left:574px;top:1044px;" width="24" height="24" viewBox="0 0 24 24"><g fill="#5ac8fa"><rect x="1" y="1" width="10" height="10"/><rect x="13" y="1" width="10" height="10"/><rect x="1" y="13" width="10" height="10"/><rect x="13" y="13" width="10" height="10"/></g></svg><svg class="a" style="left:619px;top:1044px;" width="24" height="24" viewBox="0 0 24 24"><circle cx="13" cy="10" r="7.5" fill="none" stroke="#fff" stroke-width="2.2"/><path d="M8 15 L2 22" stroke="#fff" stroke-width="2.8"/></svg><svg class="a" style="left:663px;top:1044px;" width="24" height="24" viewBox="0 0 24 24"><rect x="8" y="2" width="14" height="14" fill="#d8d8d8"/><rect x="2" y="8" width="14" height="14" fill="#8a8a8a"/></svg><svg class="a" style="left:707px;top:1044px;" width="24" height="24" viewBox="0 0 24 24"><circle cx="12" cy="12" r="11" fill="#7a6cf0"/><rect x="6" y="8" width="9" height="8" rx="1.5" fill="#fff"/><path d="M15 11 L19 8 V16 L15 13Z" fill="#fff"/></svg><svg class="a" style="left:751px;top:1044px;" width="24" height="24" viewBox="0 0 24 24"><path d="M1 4 H9 L11 6 H23 V21 H1Z" fill="#f0b820"/><path d="M1 9 H23 V21 H1Z" fill="#ffd24a"/><rect x="6" y="16" width="12" height="3" fill="#2a7ad8"/></svg><svg class="a" style="left:795px;top:1044px;" width="24" height="24" viewBox="0 0 24 24"><circle cx="12" cy="12" r="11" fill="#1a9ad8"/><path d="M4 14 Q6 4 15 5 Q22 7 21 13 H9 Q10 18 16 18 Q20 18 22 16 Q19 23 11 22 Q3 20 4 14Z" fill="#3ed07a" opacity="0.9"/><path d="M9 13 H21 Q21 7 15 6 Q10 6 9 13Z" fill="#1478c8"/></svg><svg class="a" style="left:839px;top:1044px;" width="24" height="24" viewBox="0 0 24 24"><path d="M3 7 H21 V22 H3Z" fill="#f4f4f4"/><path d="M8 7 Q8 2 12 2 Q16 2 16 7" fill="none" stroke="#f4f4f4" stroke-width="1.5"/><g><rect x="8" y="11" width="3.5" height="3.5" fill="#f25022"/><rect x="12.5" y="11" width="3.5" height="3.5" fill="#7fba00"/><rect x="8" y="15.5" width="3.5" height="3.5" fill="#00a4ef"/><rect x="12.5" y="15.5" width="3.5" height="3.5" fill="#ffb900"/></g></svg><svg class="a" style="left:883px;top:1044px;" width="24" height="24" viewBox="0 0 24 24"><path d="M1 8 L12 2 L23 8 V21 H1Z" fill="#0a64c8"/><path d="M1 8 L12 15 L23 8 V21 H1Z" fill="#3aa0f0"/></svg><svg class="a" style="left:927px;top:1044px;" width="24" height="24" viewBox="0 0 24 24"><path d="M7 9 Q6 4 9 4 Q10 2 12 4 Q14 2 15 5 Q18 4 18 8 V15 Q18 22 11 22 Q6 21 5 16 L3 11 Q4 9 7 12Z" fill="#fff" stroke="#333" stroke-width="0.8"/><path d="M2 2 L4 4 M4 1 L2 3" stroke="#fff"/></svg><svg class="a" style="left:971px;top:1044px;" width="24" height="24" viewBox="0 0 24 24"><path d="M12 1 Q23 1 23 11 Q23 16 18 15 Q15 14 15 18 Q15 23 10 23 Q1 22 1 12 Q1 1 12 1Z" fill="#3aa8f0"/><circle cx="6" cy="10" r="2" fill="#f04040"/><circle cx="10" cy="5" r="2" fill="#40c040"/><circle cx="16" cy="6" r="2" fill="#f0c040"/><path d="M14 22 L21 10" stroke="#c08040" stroke-width="3"/></svg><svg class="a" style="left:1015px;top:1044px;" width="24" height="24" viewBox="0 0 24 24"><rect x="1" y="3" width="22" height="18" rx="1" fill="#111" stroke="#666"/><rect x="1" y="3" width="22" height="3" fill="#444"/><path d="M4 9 H8 M10 12 H17" stroke="#ddd"/></svg><svg class="a" style="left:1059px;top:1044px;" width="24" height="24" viewBox="0 0 24 24"><rect x="9" y="3" width="14" height="11" fill="#f0d090"/><path d="M9 3 L16 9 L23 3" stroke="#fff" fill="none"/><rect x="6" y="9" width="17" height="13" fill="#1a7ad8"/><rect x="1" y="7" width="12" height="12" rx="1.5" fill="#0a5ab0"/><circle cx="7" cy="13" r="3.2" fill="none" stroke="#fff" stroke-width="1.8"/></svg><svg class="a" style="left:1103px;top:1044px;" width="24" height="24" viewBox="0 0 24 24"><rect x="2" y="2" width="20" height="20" fill="#e8dc9a"/><path d="M4 12 L12 7 L20 11 L12 16Z" fill="#222"/><path d="M5 9 L12 4 L19 8 L12 12Z" fill="#ccc"/><path d="M4 15 L12 20 L20 15" stroke="#111" stroke-width="2" fill="none"/></svg><svg class="a" style="left:1147px;top:1044px;" width="24" height="24" viewBox="0 0 24 24"><rect x="3" y="3" width="18" height="20" fill="#50b8e8"/><rect x="3" y="1" width="18" height="4" fill="#2a80c0"/><path d="M6 9 H18 M6 12 H18 M6 15 H18 M6 18 H18" stroke="#fff" stroke-width="1"/></svg><svg class="a" style="left:1191px;top:1044px;" width="24" height="24" viewBox="0 0 24 24"><circle cx="14" cy="12" r="10" fill="#e0603a"/><rect x="1" y="6" width="12" height="12" rx="1.5" fill="#c43e1c"/><text x="4" y="16" font-size="10" font-weight="bold" fill="#fff" font-family="Liberation Sans">P</text></svg><svg class="a" style="left:1235px;top:1044px;" width="24" height="24" viewBox="0 0 24 24"><rect x="4" y="2" width="16" height="21" fill="#fafafa" stroke="#ccc"/><path d="M4 2 H20" stroke="#333" stroke-dasharray="1 1"/><rect x="6" y="5" width="5" height="5" fill="#e020c0"/><path d="M6 13 H18 M6 16 H14" stroke="#aaa"/><circle cx="16" cy="18" r="2.5" fill="#40e0e0"/></svg><svg class="a" style="left:1279px;top:1044px;" width="24" height="24" viewBox="0 0 24 24"><circle cx="18" cy="7" r="3.5" fill="#7a7ae8"/><rect x="12" y="10" width="11" height="11" rx="5" fill="#7a7ae8"/><rect x="1" y="6" width="13" height="13" rx="1.5" fill="#4b4fc0"/><text x="4" y="17" font-size="11" font-weight="bold" fill="#fff" font-family="Liberation Sans">T</text><circle cx="20" cy="3" r="3.3" fill="#6bbf3a"/></svg><svg class="a" style="left:1323px;top:1044px;" width="24" height="24" viewBox="0 0 24 24"><rect x="6" y="2" width="17" height="20" rx="1" fill="#21a366"/><rect x="6" y="2" width="17" height="7" fill="#33c481"/><rect x="6" y="15" width="17" height="7" fill="#107c41"/><rect x="1" y="6" width="12" height="12" rx="1.5" fill="#107c41"/><text x="3.5" y="16" font-size="10" font-weight="bold" fill="#fff" font-family="Liberation Sans">X</text></svg><div class="a" style="left:760px;top:1074px;width:6px;height:3px;background:#8a8f96;border-radius:2px;"></div><div class="a" style="left:804px;top:1074px;width:6px;height:3px;background:#8a8f96;border-radius:2px;"></div><div class="a" style="left:980px;top:1074px;width:6px;height:3px;background:#8a8f96;border-radius:2px;"></div><div class="a" style="left:1068px;top:1074px;width:6px;height:3px;background:#8a8f96;border-radius:2px;"></div><div class="a" style="left:1156px;top:1074px;width:6px;height:3px;background:#8a8f96;border-radius:2px;"></div><div class="a" style="left:1244px;top:1074px;width:6px;height:3px;background:#8a8f96;border-radius:2px;"></div><div class="a" style="left:1288px;top:1074px;width:6px;height:3px;background:#8a8f96;border-radius:2px;"></div><div class="a" style="left:1332px;top:1074px;width:6px;height:3px;background:#8a8f96;border-radius:2px;"></div><div class="a" style="left:1106px;top:1074px;width:18px;height:3px;background:#4cc2ff;border-radius:2px;"></div><svg class="a" style="left:1604px;top:1050px;" width="14" height="9" viewBox="0 0 14 9"><path d="M1 8 L7 2 L13 8" stroke="#fff" fill="none" stroke-width="1.3"/></svg><svg class="a" style="left:1627px;top:1050px;" width="17" height="11" viewBox="0 0 17 11"><path d="M3 10 Q0 10 0 7 Q0 4 4 4 Q6 0 10 1 Q13 1 14 5 Q17 5 17 8 Q17 10 14 10Z" fill="#ddd"/></svg><div class="t" style="left:1657px;top:1050px;font-size:17px;color:#fff;font-weight:normal;line-height:18px;top:1047px;">A</div><svg class="a" style="left:1692px;top:1047px;" width="18" height="18" viewBox="0 0 18 18"><circle cx="9" cy="9" r="7.8" fill="none" stroke="#fff" stroke-width="1.2"/><path d="M11 4 V10 Q11 13 8 13 Q6 13 5.5 11" stroke="#fff" fill="none" stroke-width="1.3"/></svg><svg class="a" style="left:1731px;top:1048px;" width="17" height="14" viewBox="0 0 17 14"><path d="M1 5 Q8.5 -2 16 5 M3.5 8 Q8.5 3 13.5 8 M6 10.5 Q8.5 8 11 10.5" stroke="#fff" fill="none" stroke-width="1.3"/><circle cx="8.5" cy="12.5" r="1.2" fill="#fff"/></svg><svg class="a" style="left:1756px;top:1049px;" width="17" height="14" viewBox="0 0 17 14"><path d="M1 5 H4 L8 1 V13 L4 9 H1Z" fill="none" stroke="#fff" stroke-width="1.1"/><path d="M11 4 Q13 7 11 10 M13 2 Q16 7 13 12" stroke="#fff" fill="none" stroke-width="1.1"/></svg><svg class="a" style="left:1779px;top:1048px;" width="17" height="15" viewBox="0 0 17 15"><rect x="5" y="4" width="10" height="8" fill="none" stroke="#fff" stroke-width="1.2"/><rect x="15" y="6" width="1.5" height="4" fill="#fff"/><rect x="6.5" y="5.5" width="5" height="5" fill="#fff"/><path d="M1 2 V5 M3 2 V5 M0 5 H4 V7 L2 9 V12" stroke="#fff" fill="none" stroke-width="1"/></svg><div class="t" style="left:1812px;top:1042px;font-size:12px;color:#fff;width:60px;text-align:right;">17:38</div><div class="t" style="left:1812px;top:1058px;font-size:12px;color:#fff;width:60px;text-align:right;">2022/04/13</div><svg class="a" style="left:1882px;top:1046px;" width="20" height="20" viewBox="0 0 20 20"><circle cx="10" cy="10" r="10" fill="#1a8cf8"/><text x="10" y="14" font-size="11" fill="#111" text-anchor="middle" font-family="Liberation Sans">11</text></svg><div class="a" style="left:875px;top:1px;width:281px;height:32px;background:#ffffff;box-shadow:2px 2px 3px rgba(0,0,0,0.35);border:1px solid #d8d8d8;"></div><svg class="a" style="left:881px;top:9px;" width="16" height="16" viewBox="0 0 16 16"><path d="M1 6 L5 2 H9 L15 8 V15 H9 L1 7Z" fill="#f5cf3a" stroke="#445" stroke-width="0.7"/><path d="M5 2 H9 L13 6 V9 H8 L5 6Z" fill="#9cc0f0" stroke="#1b3fa0" stroke-width="0.7"/><rect x="9" y="9" width="6" height="6" fill="#e6b520" stroke="#445" stroke-width="0.7"/></svg><svg class="a" style="left:904px;top:9px;" width="16" height="16" viewBox="0 0 16 16"><path d="M1 6 L4 1 H11 Q15 2 15 6 V13 L13 15 H1Z" fill="#f5cf3a" stroke="#333" stroke-width="0.7"/><path d="M1 6 L4 1 H11 Q15 2 15 6 L12 6 H1Z" fill="#fff" stroke="#333" stroke-width="0.7"/><path d="M10 1 Q15 2 15 6 L12 6 Q12 3 10 1Z" fill="#8ab0d8"/></svg><svg class="a" style="left:927px;top:9px;" width="16" height="16" viewBox="0 0 16 16"><path d="M1 8 L6 2 H11 L15 6 V15 H3 L1 13Z" fill="#f5cf3a" stroke="#333" stroke-width="0.7"/><path d="M1 8 L6 2 L10 5 L5 10Z" fill="#8aa8d0" stroke="#333" stroke-width="0.7"/><path d="M6 2 H11 L15 6 H10Z" fill="#fff" stroke="#333" stroke-width="0.6"/></svg><svg class="a" style="left:950px;top:9px;" width="16" height="16" viewBox="0 0 16 16"><path d="M1 6 H8 L12 15 H1Z" fill="#f5cf3a" stroke="#333" stroke-width="0.6"/><path d="M8 5 L11 3 L15 12 L12 15Z" fill="#6aa0e0" stroke="#333" stroke-width="0.6"/><path d="M11 1 L14 5" stroke="#d22" stroke-dasharray="1 1"/></svg><svg class="a" style="left:973px;top:9px;" width="16" height="16" viewBox="0 0 16 16"><path d="M1 4 L4 1 H15 V12 L12 15 H1Z" fill="#f5cf3a" stroke="#333" stroke-width="0.6"/><rect x="1" y="4" width="11" height="11" fill="#6aaae8" stroke="#1b3fa0" stroke-width="0.8"/><rect x="4" y="7" width="5" height="5" fill="#fff" stroke="#1b3fa0" stroke-width="0.6"/></svg><svg class="a" style="left:996px;top:9px;" width="16" height="16" viewBox="0 0 16 16"><rect x="6" y="1" width="9" height="9" fill="#f5cf3a" stroke="#333" stroke-width="0.6"/><circle cx="6" cy="10" r="5" fill="#8ab0e0" stroke="#333" stroke-width="0.6" opacity="0.85"/></svg><svg class="a" style="left:1019px;top:9px;" width="16" height="16" viewBox="0 0 16 16"><path d="M1 5 L4 2 H15 V13 L12 15 H1Z" fill="#f5cf3a" stroke="#333" stroke-width="0.6"/><path d="M1 5 L4 2 H15 L12 5 Q8 9 5 7 Q3 6 1 9Z" fill="#8ab0d8" stroke="#333" stroke-width="0.6"/></svg><svg class="a" style="left:1042px;top:9px;" width="16" height="16" viewBox="0 0 16 16"><path d="M2 1 H8 L14 15 H2Z" fill="#f5cf3a" stroke="#333" stroke-width="0.6"/><rect x="2" y="1" width="5" height="14" fill="#9ec0e8"/><path d="M6 11 H12" stroke="#d22" stroke-width="1.2"/></svg><svg class="a" style="left:1065px;top:9px;" width="16" height="16" viewBox="0 0 16 16"><path d="M1 4 L3 2 H9 V9 L7 11 H1Z" fill="#f0f0f0" stroke="#ccc" stroke-width="0.7"/><path d="M10 10 L14 14 M14 10 L10 14" stroke="#aaa"/></svg><svg class="a" style="left:1088px;top:9px;" width="16" height="16" viewBox="0 0 16 16"><path d="M2 9 Q1 3 8 2 Q14 2 15 8 L10 14 H5Z" fill="#dde4ee" stroke="#888" stroke-width="0.7"/><path d="M4 13 L13 4" stroke="#d22" stroke-width="0.8"/><circle cx="11" cy="13" r="1.8" fill="none" stroke="#333"/><circle cx="14" cy="12" r="1.8" fill="none" stroke="#333"/></svg><svg class="a" style="left:1111px;top:9px;" width="16" height="16" viewBox="0 0 16 16"><path d="M1 15 V3 L5 1 L15 12 L13 15Z" fill="#f5cf3a" stroke="#333" stroke-width="0.7"/><path d="M4 5 L12 13 H4Z" fill="#8ab0e0" stroke="#333" stroke-width="0.6"/></svg><svg class="a" style="left:1134px;top:9px;" width="16" height="16" viewBox="0 0 16 16"><rect x="1" y="4" width="14" height="12" fill="#fff" stroke="#666" stroke-width="0.8"/><path d="M7 4 L11 1 H14 V4" fill="#f0d8a0"/><rect x="13" y="1" width="2" height="5" fill="#2a2"/><path d="M2 8 L4 9 M2 12 L4 13" stroke="#2a2"/><path d="M6 8 H13 M6 11 H13 M6 14 H13" stroke="#333" stroke-width="1.2"/></svg><div class="a" style="left:875px;top:46px;width:358px;height:766px;background:#fcfcfc;border:1px solid #cbcbcb;box-shadow:3px 3px 3px rgba(0,0,0,0.28);"></div><div class="a" style="left:878px;top:788px;width:353px;height:22px;background:#cdcdcd;"></div><div class="t" style="left:909px;top:52px;font-size:12px;color:#111;"><span style="font-size:15.0px;letter-spacing:0">編集</span></div><div class="a" style="left:908px;top:75px;width:320px;height:1px;background:#d4d4d4;"></div><div class="t" style="left:909px;top:82px;font-size:12px;color:#111;">TriBall (<span style="font-size:15.0px;letter-spacing:0">移動</span>/<span style="font-size:13.0px;letter-spacing:0">コピー</span>/<span style="font-size:13.0px;letter-spacing:0">リンク</span> <span style="font-size:13.0px;letter-spacing:0">コピー</span>)</div><div class="t" style="left:1060px;top:82px;font-size:12px;color:#111;width:161px;text-align:right;">F10</div><svg class="a" style="left:882px;top:80px;" width="16" height="16" viewBox="0 0 16 16"><circle cx="8" cy="8" r="7" fill="#c5d5ea" stroke="#8a96a8"/><rect x="1" y="8" width="3" height="4" fill="#a8b4c8"/><rect x="12" y="8" width="3" height="4" fill="#a8b4c8"/><circle cx="8" cy="7" r="0.8" fill="#d22"/></svg><div class="a" style="left:908px;top:105px;width:320px;height:1px;background:#d4d4d4;"></div><div class="t" style="left:909px;top:112px;font-size:12px;color:#111;"><span style="font-size:13.0px;letter-spacing:0">アクテ</span><span style="font-size:10.0px;letter-spacing:0">ィ</span><span style="font-size:13.0px;letter-spacing:0">ブ</span><span style="font-size:14.0px;letter-spacing:0">に</span><span style="font-size:15.0px;letter-spacing:0">設定</span></div><div class="t" style="left:1060px;top:112px;font-size:12px;color:#111;width:161px;text-align:right;">Ctrl+Shift+A</div><svg class="a" style="left:882px;top:110px;" width="16" height="16" viewBox="0 0 16 16"><path d="M1 5.5 Q1 4 3.5 4 Q6 4 6 5.5 V12.5 Q6 14 3.5 14 Q1 14 1 12.5Z" fill="#f5cf3a" stroke="#7a88b0" stroke-width="0.8"/><path d="M10 5.5 Q10 4 12.5 4 Q15 4 15 5.5 V12.5 Q15 14 12.5 14 Q10 14 10 12.5Z" fill="#9cbcec" stroke="#5a70a8" stroke-width="0.8"/><path d="M6 9 H10" stroke="#e22" stroke-width="0.9"/></svg><div class="t" style="left:909px;top:134px;font-size:12px;color:#111;"><span style="font-size:14.0px;letter-spacing:0">すべて</span><span style="font-size:15.0px;letter-spacing:0">非</span><span style="font-size:13.0px;letter-spacing:0">アクテ</span><span style="font-size:10.0px;letter-spacing:0">ィ</span><span style="font-size:13.0px;letter-spacing:0">ブ</span><span style="font-size:14.0px;letter-spacing:0">に</span><span style="font-size:15.0px;letter-spacing:0">設定</span></div><svg class="a" style="left:882px;top:132px;" width="16" height="16" viewBox="0 0 16 16"><path d="M1 5.5 Q1 4 3.5 4 Q6 4 6 5.5 V12.5 Q6 14 3.5 14 Q1 14 1 12.5Z" fill="#f5cf3a" stroke="#7a88b0" stroke-width="0.8"/><path d="M10 5.5 Q10 4 12.5 4 Q15 4 15 5.5 V12.5 Q15 14 12.5 14 Q10 14 10 12.5Z" fill="#9cbcec" stroke="#5a70a8" stroke-width="0.8"/><path d="M6 9 H10" stroke="#e22" stroke-width="0.9"/></svg><div class="a" style="left:908px;top:156px;width:320px;height:1px;background:#d4d4d4;"></div><div class="t" style="left:909px;top:164px;font-size:12px;color:#111;"><span style="font-size:15.0px;letter-spacing:0">選択中</span><span style="font-size:14.0px;letter-spacing:0">の</span><span style="font-size:13.0px;letter-spacing:0">オブジ</span><span style="font-size:10.0px;letter-spacing:0">ェ</span><span style="font-size:13.0px;letter-spacing:0">クト</span><span style="font-size:14.0px;letter-spacing:0">を</span><span style="font-size:15.0px;letter-spacing:0">非表示</span></div><div class="t" style="left:1060px;top:164px;font-size:12px;color:#111;width:161px;text-align:right;">Ctrl+Space</div><svg class="a" style="left:882px;top:162px;" width="16" height="16" viewBox="0 0 16 16"><path d="M1 5.5 Q1 4 3.5 4 Q6 4 6 5.5 V12.5 Q6 14 3.5 14 Q1 14 1 12.5Z" fill="#8fb2ec" stroke="#4a68b0" stroke-width="0.8"/><path d="M10 5.5 Q10 4 12.5 4 Q15 4 15 5.5 V12.5 Q15 14 12.5 14 Q10 14 10 12.5Z" fill="#fbfbf6" stroke="#b8b8a8" stroke-width="0.8"/><path d="M6 9 H10" stroke="#e22" stroke-width="0.9"/></svg><div class="t" style="left:909px;top:186px;font-size:12px;color:#111;"><span style="font-size:15.0px;letter-spacing:0">選択中</span><span style="font-size:14.0px;letter-spacing:0">の</span><span style="font-size:13.0px;letter-spacing:0">オブジ</span><span style="font-size:10.0px;letter-spacing:0">ェ</span><span style="font-size:13.0px;letter-spacing:0">クト</span><span style="font-size:15.0px;letter-spacing:0">以外</span><span style="font-size:14.0px;letter-spacing:0">を</span><span style="font-size:15.0px;letter-spacing:0">非表示</span></div><div class="t" style="left:1060px;top:186px;font-size:12px;color:#111;width:161px;text-align:right;">Ctrl+Alt+Space</div><svg class="a" style="left:882px;top:184px;" width="16" height="16" viewBox="0 0 16 16"><path d="M1 5.5 Q1 4 3.5 4 Q6 4 6 5.5 V12.5 Q6 14 3.5 14 Q1 14 1 12.5Z" fill="#7ea4e8" stroke="#3a58a8" stroke-width="0.8"/><path d="M9 5.5 Q9 4 11.5 4 Q14 4 14 5.5 V12.5 Q14 14 11.5 14 Q9 14 9 12.5Z" fill="#7ea4e8" stroke="#3a58a8" stroke-width="0.8"/><path d="M12 4.5 Q15 4.5 15 6 V12" fill="none" stroke="#aaa" stroke-width="0.8"/><path d="M6 9 H9" stroke="#e22" stroke-width="0.9"/></svg><div class="t" style="left:909px;top:208px;font-size:12px;color:#111;"><span style="font-size:14.0px;letter-spacing:0">すべて</span><span style="font-size:15.0px;letter-spacing:0">表示</span></div><div class="t" style="left:1060px;top:208px;font-size:12px;color:#111;width:161px;text-align:right;">Shift+Space</div><svg class="a" style="left:882px;top:206px;" width="16" height="16" viewBox="0 0 16 16"><path d="M1 5.5 Q1 4 3.5 4 Q6 4 6 5.5 V12.5 Q6 14 3.5 14 Q1 14 1 12.5Z" fill="#fbfbf6" stroke="#b8b8a8" stroke-width="0.8"/><path d="M10 5.5 Q10 4 12.5 4 Q15 4 15 5.5 V12.5 Q15 14 12.5 14 Q10 14 10 12.5Z" fill="#6e98e0" stroke="#3a58a8" stroke-width="0.8"/><path d="M12 3 Q15 3 15 5" fill="none" stroke="#3a58a8" stroke-width="0.8"/><path d="M6 9 H10" stroke="#e22" stroke-width="0.9"/></svg><div class="t" style="left:909px;top:230px;font-size:12px;color:#111;"><span style="font-size:15.0px;letter-spacing:0">選択中</span><span style="font-size:14.0px;letter-spacing:0">の</span><span style="font-size:13.0px;letter-spacing:0">オブジ</span><span style="font-size:10.0px;letter-spacing:0">ェ</span><span style="font-size:13.0px;letter-spacing:0">クト</span><span style="font-size:14.0px;letter-spacing:0">を</span><span style="font-size:15.0px;letter-spacing:0">表示</span></div><svg class="a" style="left:882px;top:228px;" width="16" height="16" viewBox="0 0 16 16"><path d="M1 5.5 Q1 4 3.5 4 Q6 4 6 5.5 V12.5 Q6 14 3.5 14 Q1 14 1 12.5Z" fill="#fbfbf6" stroke="#b8b8a8" stroke-width="0.8"/><path d="M10 5.5 Q10 4 12.5 4 Q15 4 15 5.5 V12.5 Q15 14 12.5 14 Q10 14 10 12.5Z" fill="#8fb2ec" stroke="#4a68b0" stroke-width="0.8"/><path d="M6 9 H10" stroke="#e22" stroke-width="0.9"/></svg><div class="t" style="left:909px;top:252px;font-size:12px;color:#111;"><span style="font-size:15.0px;letter-spacing:0">選択中</span><span style="font-size:14.0px;letter-spacing:0">の</span><span style="font-size:13.0px;letter-spacing:0">オブジ</span><span style="font-size:10.0px;letter-spacing:0">ェ</span><span style="font-size:13.0px;letter-spacing:0">クト</span><span style="font-size:15.0px;letter-spacing:0">以下</span><span style="font-size:14.0px;letter-spacing:0">を</span><span style="font-size:15.0px;letter-spacing:0">表示</span></div><svg class="a" style="left:882px;top:250px;" width="16" height="16" viewBox="0 0 16 16"><path d="M1 5.5 Q1 4 3.5 4 Q6 4 6 5.5 V12.5 Q6 14 3.5 14 Q1 14 1 12.5Z" fill="#fbfbf6" stroke="#b8b8a8" stroke-width="0.8"/><path d="M10 5.5 Q10 4 12.5 4 Q15 4 15 5.5 V12.5 Q15 14 12.5 14 Q10 14 10 12.5Z" fill="#8fb2ec" stroke="#4a68b0" stroke-width="0.8"/><path d="M6 9 H10" stroke="#e22" stroke-width="0.9"/></svg><div class="a" style="left:908px;top:274px;width:320px;height:1px;background:#d4d4d4;"></div><div class="t" style="left:909px;top:282px;font-size:12px;color:#111;"><span style="font-size:13.0px;letter-spacing:0">シ</span><span style="font-size:10.0px;letter-spacing:0">ェ</span><span style="font-size:13.0px;letter-spacing:0">ル</span><span style="font-size:15.0px;letter-spacing:0">化</span>(S)</div><svg class="a" style="left:882px;top:280px;" width="16" height="16" viewBox="0 0 16 16"><path d="M1 4 L4 1 H15 V12 L12 15 H1Z" fill="#f5cf3a" stroke="#333" stroke-width="0.6"/><rect x="1" y="4" width="11" height="11" fill="#4a88d0" stroke="#1b3f80" stroke-width="0.8"/><rect x="4" y="7" width="5" height="5" fill="#a8d0f0" stroke="#1b3f80" stroke-width="0.6"/></svg><div class="a" style="left:908px;top:304px;width:320px;height:1px;background:#d4d4d4;"></div><div class="t" style="left:909px;top:312px;font-size:12px;color:#111;"><span style="font-size:15.0px;letter-spacing:0">親</span><span style="font-size:14.0px;letter-spacing:0">に</span><span style="font-size:15.0px;letter-spacing:0">固定</span>(F)</div><svg class="a" style="left:882px;top:310px;" width="16" height="16" viewBox="0 0 16 16"><path d="M1 6 L5 2 H15 V10 L11 14 H1Z" fill="#f5cf3a" stroke="#555" stroke-width="0.6"/><path d="M2 9 H12 M2 12 H12" stroke="#333"/></svg><div class="t" style="left:909px;top:334px;font-size:12px;color:#111;"><span style="font-size:15.0px;letter-spacing:0">選択</span><span style="font-size:14.0px;letter-spacing:0">に</span><span style="font-size:13.0px;letter-spacing:0">ズーム</span></div><div class="t" style="left:1060px;top:334px;font-size:12px;color:#111;width:161px;text-align:right;">Shift+Z</div><svg class="a" style="left:882px;top:332px;" width="16" height="16" viewBox="0 0 16 16"><circle cx="6.5" cy="6.5" r="5.5" fill="#f4f8ff" stroke="#333" stroke-width="1.2"/><path d="M4 5.5 H9 M4 7.5 H9" stroke="#333"/><path d="M10.5 10.5 L15 15" stroke="#333" stroke-width="2"/></svg><div class="t" style="left:909px;top:356px;font-size:12px;color:#111;"><span style="font-size:13.0px;letter-spacing:0">シーン</span> <span style="font-size:13.0px;letter-spacing:0">ブラウザ</span><span style="font-size:14.0px;letter-spacing:0">を</span><span style="font-size:15.0px;letter-spacing:0">検索</span></div><div class="t" style="left:1060px;top:356px;font-size:12px;color:#111;width:161px;text-align:right;">Ctrl+B</div><svg class="a" style="left:882px;top:354px;" width="16" height="16" viewBox="0 0 16 16"><g fill="#f0f4a0" stroke="#5a8fc8" stroke-width="0.8"><rect x="4" y="5" width="3" height="3"/><rect x="1.5" y="10" width="3" height="3"/><rect x="6.5" y="10" width="3" height="3"/><rect x="0.5" y="13.5" width="3" height="2.5"/><rect x="7" y="13.5" width="3" height="2.5"/></g><circle cx="12" cy="4" r="3" fill="#fff" stroke="#333"/><path d="M14 6 L16 8" stroke="#333" stroke-width="1.4"/></svg><div class="t" style="left:909px;top:378px;font-size:12px;color:#111;"><span style="font-size:15.0px;letter-spacing:0">抑制</span></div><div class="t" style="left:1060px;top:378px;font-size:12px;color:#111;width:161px;text-align:right;">K</div><svg class="a" style="left:882px;top:376px;" width="16" height="16" viewBox="0 0 16 16"><rect x="1" y="1" width="8" height="8" fill="#f5cf3a" stroke="#555" stroke-width="0.7"/><rect x="7" y="7" width="8" height="8" fill="#fff" stroke="#4a6aa8" stroke-width="0.8"/><path d="M11 1 L14 4" stroke="#d22" stroke-width="1.2"/></svg><div class="t" style="left:909px;top:400px;font-size:12px;color:#a9a9a9;"><span style="font-size:13.0px;letter-spacing:0">リンク</span><span style="font-size:15.0px;letter-spacing:0">解除</span></div><svg class="a" style="left:882px;top:398px;" width="16" height="16" viewBox="0 0 16 16"><rect x="1" y="9" width="6" height="6" fill="none" stroke="#c8c8c8"/><path d="M4 12 L13 3 M10 2 L15 7 M12 1 L15 4" stroke="#bbb"/></svg><div class="t" style="left:909px;top:422px;font-size:12px;color:#111;"><span style="font-size:15.0px;letter-spacing:0">並</span><span style="font-size:14.0px;letter-spacing:0">び</span><span style="font-size:15.0px;letter-spacing:0">替</span><span style="font-size:14.0px;letter-spacing:0">えを</span><span style="font-size:15.0px;letter-spacing:0">許可</span></div><svg class="a" style="left:882px;top:420px;" width="16" height="16" viewBox="0 0 16 16"><path d="M4 8 L7 11 L12 5" stroke="#444" stroke-width="1.6" fill="none"/></svg><div class="t" style="left:909px;top:444px;font-size:12px;color:#111;"><span style="font-size:13.0px;letter-spacing:0">パーツ</span><span style="font-size:15.0px;letter-spacing:0">配下</span><span style="font-size:14.0px;letter-spacing:0">の</span><span style="font-size:15.0px;letter-spacing:0">要素</span><span style="font-size:14.0px;letter-spacing:0">を</span><span style="font-size:15.0px;letter-spacing:0">表示</span><span style="font-size:14.0px;letter-spacing:0">しない</span></div><div class="t" style="left:909px;top:466px;font-size:12px;color:#111;"><span style="font-size:15.0px;letter-spacing:0">無効</span><span style="font-size:14.0px;letter-spacing:0">な</span><span style="font-size:13.0px;letter-spacing:0">フ</span><span style="font-size:10.0px;letter-spacing:0">ィ</span><span style="font-size:13.0px;letter-spacing:0">ーチ</span><span style="font-size:10.0px;letter-spacing:0">ャ</span><span style="font-size:14.0px;letter-spacing:0">を</span><span style="font-size:15.0px;letter-spacing:0">検索</span></div><div class="t" style="left:909px;top:488px;font-size:12px;color:#111;"><span style="font-size:15.0px;letter-spacing:0">一覧</span><span style="font-size:14.0px;letter-spacing:0">から</span><span style="font-size:15.0px;letter-spacing:0">要素</span><span style="font-size:14.0px;letter-spacing:0">を</span><span style="font-size:15.0px;letter-spacing:0">選択</span></div><div class="a" style="left:908px;top:510px;width:320px;height:1px;background:#d4d4d4;"></div><div class="t" style="left:909px;top:518px;font-size:12px;color:#a9a9a9;"><span style="font-size:13.0px;letter-spacing:0">パーツ</span>/<span style="font-size:13.0px;letter-spacing:0">アセンブリ</span><span style="font-size:14.0px;letter-spacing:0">を</span><span style="font-size:15.0px;letter-spacing:0">開</span><span style="font-size:14.0px;letter-spacing:0">く</span></div><svg class="a" style="left:882px;top:516px;" width="16" height="16" viewBox="0 0 16 16"><path d="M1 3 H6 L7 5 H13 V7 H4 L1 13Z" fill="#e4e4e4" stroke="#c8c8c8" stroke-width="0.7"/><path d="M4 7 H16 L13 13 H1Z" fill="#ececec" stroke="#c8c8c8" stroke-width="0.7"/></svg><div class="t" style="left:909px;top:540px;font-size:12px;color:#a9a9a9;"><span style="font-size:13.0px;letter-spacing:0">パーツ</span>/<span style="font-size:13.0px;letter-spacing:0">アセンブリ</span><span style="font-size:14.0px;letter-spacing:0">を</span><span style="font-size:15.0px;letter-spacing:0">保存</span></div><svg class="a" style="left:882px;top:538px;" width="16" height="16" viewBox="0 0 16 16"><path d="M1 2 L14 15 M1 5 L11 15" stroke="#c8c8c8" stroke-width="1.5"/><rect x="7" y="1" width="8" height="8" fill="none" stroke="#c8c8c8" stroke-width="1.3"/></svg><div class="t" style="left:909px;top:562px;font-size:12px;color:#a9a9a9;"><span style="font-size:13.0px;letter-spacing:0">リンク</span><span style="font-size:15.0px;letter-spacing:0">解除</span>[<span style="font-size:15.0px;letter-spacing:0">外部</span>]</div><svg class="a" style="left:882px;top:560px;" width="16" height="16" viewBox="0 0 16 16"><path d="M1 2 L14 15 M1 5 L11 15 M10 1 L15 6" stroke="#c8c8c8" stroke-width="1.5"/></svg><div class="t" style="left:909px;top:584px;font-size:12px;color:#111;"><span style="font-size:13.0px;letter-spacing:0">エクスポート</span>(E)</div><svg class="a" style="left:882px;top:582px;" width="16" height="16" viewBox="0 0 16 16"><path d="M2 4 H14 V14 H2Z" fill="#f5cf3a"/><path d="M2 4 L4 1 H12 L14 4" fill="#e0b020"/><rect x="3" y="10" width="4" height="4" fill="#ccd8e8" stroke="#334" stroke-width="0.7"/><rect x="9" y="11" width="5" height="2" fill="#1e6fd0"/></svg><div class="a" style="left:908px;top:606px;width:320px;height:1px;background:#d4d4d4;"></div><div class="t" style="left:909px;top:614px;font-size:12px;color:#111;"><span style="font-size:13.0px;letter-spacing:0">パーツ</span><span style="font-size:14.0px;letter-spacing:0">から</span>2D<span style="font-size:13.0px;letter-spacing:0">ドローイング</span><span style="font-size:14.0px;letter-spacing:0">を</span><span style="font-size:15.0px;letter-spacing:0">作成</span></div><svg class="a" style="left:882px;top:612px;" width="16" height="16" viewBox="0 0 16 16"><path d="M0.5 1.5 H11 L15.5 5 V14.5 H0.5Z" fill="#fff" stroke="#333" stroke-width="0.8"/><path d="M3 4 H10 V5.5 H7.5 V9 H10 V10.5 H3 V9 H5.5 V5.5 H3Z" fill="#b01010"/></svg><div class="t" style="left:909px;top:636px;font-size:12px;color:#111;"><span style="font-size:13.0px;letter-spacing:0">パーツ</span><span style="font-size:14.0px;letter-spacing:0">から</span><span style="font-size:15.0px;letter-spacing:0">図面</span><span style="font-size:14.0px;letter-spacing:0">の</span><span style="font-size:15.0px;letter-spacing:0">一括作成</span></div><svg class="a" style="left:882px;top:634px;" width="16" height="16" viewBox="0 0 16 16"><rect x="0.5" y="2.5" width="15" height="12" fill="#fff" stroke="#555" stroke-width="0.8"/><rect x="2.5" y="4.5" width="11" height="8" fill="#eee" stroke="#999" stroke-width="0.5"/><path d="M4 5 H11 V6.5 H8.5 V10 H11 V11.5 H4 V10 H6.5 V6.5 H4Z" fill="#b01010"/></svg><div class="t" style="left:909px;top:658px;font-size:12px;color:#111;"><span style="font-size:15.0px;letter-spacing:0">正面図</span><span style="font-size:14.0px;letter-spacing:0">の</span><span style="font-size:15.0px;letter-spacing:0">定義</span></div><div class="a" style="left:908px;top:680px;width:320px;height:1px;background:#d4d4d4;"></div><div class="t" style="left:909px;top:688px;font-size:12px;color:#111;">SmartPaint...</div><svg class="a" style="left:882px;top:686px;" width="16" height="16" viewBox="0 0 16 16"><path d="M2 15 Q1 11 5 10 L7 12 Q6 15 2 15Z" fill="#2a3ad0"/><path d="M6 10 L14 1 L15 2 L8 12Z" fill="#e8c020" stroke="#555" stroke-width="0.5"/></svg><div class="a" style="left:908px;top:710px;width:320px;height:1px;background:#d4d4d4;"></div><div class="t" style="left:909px;top:718px;font-size:12px;color:#111;"><span style="font-size:15.0px;letter-spacing:0">材料</span><span style="font-size:14.0px;letter-spacing:0">を</span><span style="font-size:15.0px;letter-spacing:0">編集</span>...</div><div class="a" style="left:908px;top:740px;width:320px;height:1px;background:#d4d4d4;"></div><div class="t" style="left:909px;top:748px;font-size:12px;color:#111;"><span style="font-size:13.0px;letter-spacing:0">パラメーター</span>...</div><svg class="a" style="left:882px;top:746px;" width="16" height="16" viewBox="0 0 16 16"><path d="M1 3 V15 M15 3 V15 M1 4 H15" stroke="#888" stroke-width="0.8"/><rect x="3" y="6" width="10" height="8" fill="#8a96a8"/><path d="M3 9 H13 M3 11.5 H13 M6.5 6 V14 M9.5 6 V14" stroke="#ddd" stroke-width="0.7"/><circle cx="4" cy="4" r="2.2" fill="#f0a020"/><circle cx="4" cy="4" r="1" fill="#ff3"/></svg><div class="t" style="left:909px;top:770px;font-size:12px;color:#111;"><span style="font-size:13.0px;letter-spacing:0">パーツ</span> <span style="font-size:13.0px;letter-spacing:0">プロパテ</span><span style="font-size:10.0px;letter-spacing:0">ィ</span>...</div><svg class="a" style="left:882px;top:768px;" width="16" height="16" viewBox="0 0 16 16"><rect x="2.5" y="0.5" width="11" height="15" fill="#fff" stroke="#555" stroke-width="0.8"/><rect x="4" y="2" width="6" height="6" fill="#3a78c8"/><path d="M11.5 2 V7 M5 12 H12 M5 12 L7 10.5 M5 12 L7 13.5" stroke="#555"/></svg><div class="t" style="left:909px;top:792px;font-size:12px;color:#111;"><span style="font-size:13.0px;letter-spacing:0">デザイン</span> <span style="font-size:13.0px;letter-spacing:0">バリエーシ</span><span style="font-size:10.0px;letter-spacing:0">ョ</span><span style="font-size:13.0px;letter-spacing:0">ン</span></div><svg class="a" style="left:1223px;top:54px;" width="5" height="8" viewBox="0 0 5 8"><path d="M0 0 L5 4 L0 8Z" fill="#222"/></svg><svg class="a" style="left:1223px;top:794px;" width="5" height="8" viewBox="0 0 5 8"><path d="M0 0 L5 4 L0 8Z" fill="#222"/></svg><div class="a" style="left:1233px;top:786px;width:97px;height:143px;background:#fcfcfc;border:1px solid #cbcbcb;box-shadow:3px 3px 3px rgba(0,0,0,0.28);"></div><div class="t" style="left:1267px;top:792px;font-size:12px;color:#111;"><span style="font-size:15.0px;letter-spacing:0">編集</span></div><div class="t" style="left:1267px;top:814px;font-size:12px;color:#111;"><span style="font-size:15.0px;letter-spacing:0">削除</span></div><div class="t" style="left:1267px;top:845px;font-size:12px;color:#111;">10A</div><div class="t" style="left:1267px;top:867px;font-size:12px;color:#111;">15A</div><div class="t" style="left:1267px;top:889px;font-size:12px;color:#111;">20A</div><div class="t" style="left:1267px;top:911px;font-size:12px;color:#111;">400A</div><div class="a" style="left:1266px;top:836px;width:58px;height:1px;background:#d7d7d7;"></div><svg class="a" style="left:1243px;top:889px;" width="12" height="12" viewBox="0 0 12 12"><path d="M2 6 L5 9 L10 3" stroke="#555" stroke-width="1.6" fill="none"/></svg>
</body></html>
